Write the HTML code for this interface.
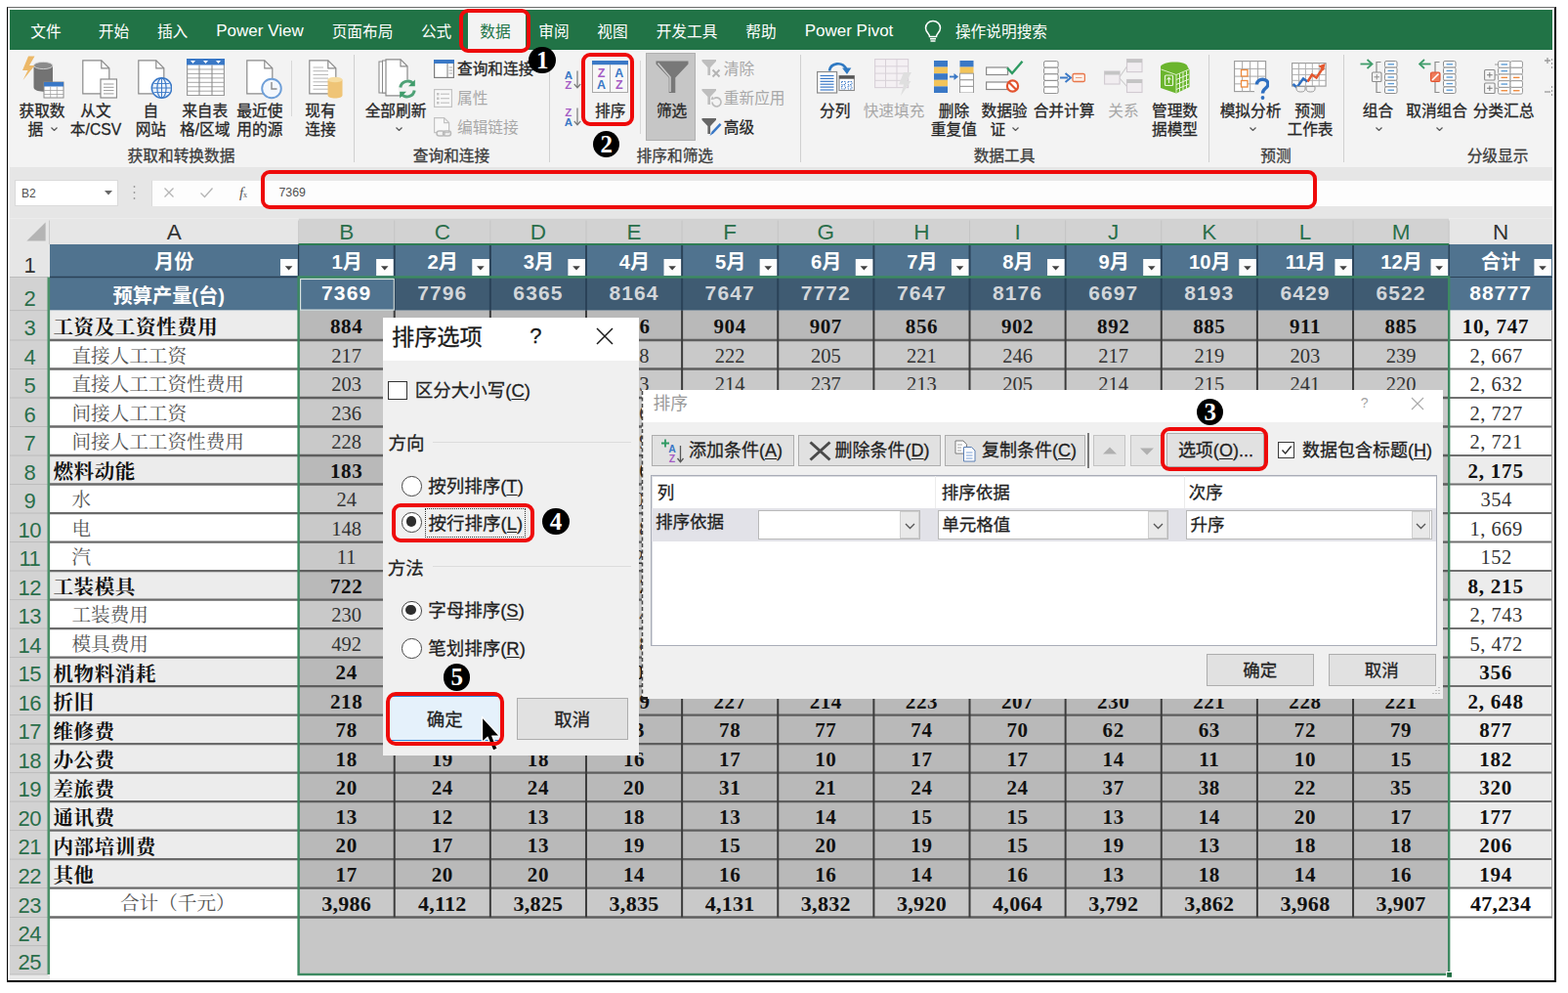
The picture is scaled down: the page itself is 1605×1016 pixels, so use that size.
<!DOCTYPE html>
<html lang="zh-CN"><head><meta charset="utf-8">
<title>Excel - 排序</title>
<style>
html,body{margin:0;padding:0;}
body{width:1605px;height:1016px;position:relative;overflow:hidden;background:#fff;font-family:"Liberation Sans", "Noto Sans CJK SC", sans-serif;}
div,svg{position:absolute;box-sizing:border-box;}
.t{white-space:nowrap;overflow:visible;font-family:"Liberation Sans", "Noto Sans CJK SC", sans-serif;}
.f{font-family:"Liberation Serif", "Noto Serif CJK SC", serif;}
.h{-webkit-text-stroke:.28px currentColor;}
u{text-decoration:underline;text-underline-offset:2px;}
</style></head>
<body>
<div style="left:7px;top:7px;width:1586px;height:998px;border-top:1px solid #6b6b6b;border-left:1.5px solid #000;border-right:2px solid #000;border-bottom:2px solid #000;"></div>
<div style="left:10px;top:9.5px;width:1579px;height:41.8px;background:#217346;"></div>
<div class="t" style="left:-153px;top:22.9px;width:400px;height:20px;line-height:20px;font-size:15.7px;color:#fff;text-align:center;">文件</div>
<div class="t" style="left:-83.5px;top:22.9px;width:400px;height:20px;line-height:20px;font-size:15.7px;color:#fff;text-align:center;">开始</div>
<div class="t" style="left:-23.4px;top:22.9px;width:400px;height:20px;line-height:20px;font-size:15.7px;color:#fff;text-align:center;">插入</div>
<div class="t" style="left:171px;top:22.9px;width:400px;height:20px;line-height:20px;font-size:15.7px;color:#fff;text-align:center;">页面布局</div>
<div class="t" style="left:246.6px;top:22.9px;width:400px;height:20px;line-height:20px;font-size:15.7px;color:#fff;text-align:center;">公式</div>
<div class="t" style="left:367px;top:22.9px;width:400px;height:20px;line-height:20px;font-size:15.7px;color:#fff;text-align:center;">审阅</div>
<div class="t" style="left:427px;top:22.9px;width:400px;height:20px;line-height:20px;font-size:15.7px;color:#fff;text-align:center;">视图</div>
<div class="t" style="left:503px;top:22.9px;width:400px;height:20px;line-height:20px;font-size:15.7px;color:#fff;text-align:center;">开发工具</div>
<div class="t" style="left:579px;top:22.9px;width:400px;height:20px;line-height:20px;font-size:15.7px;color:#fff;text-align:center;">帮助</div>
<div class="t" style="left:825px;top:22.9px;width:400px;height:20px;line-height:20px;font-size:15.7px;color:#fff;text-align:center;">操作说明搜索</div>
<div class="t" style="left:66px;top:20.6px;width:400px;height:22px;line-height:22px;font-size:17px;color:#fff;text-align:center;">Power View</div>
<div class="t" style="left:669px;top:20.6px;width:400px;height:22px;line-height:22px;font-size:17px;color:#fff;text-align:center;">Power Pivot</div>
<div style="left:478.5px;top:13px;width:59px;height:39px;background:#f3f3f3;"></div>
<div class="t" style="left:307px;top:22.9px;width:400px;height:20px;line-height:20px;font-size:15.7px;color:#217346;text-align:center;">数据</div>
<svg style="left:945px;top:20px;" width="20" height="25" viewBox="0 0 20 25"><path d="M10 1.5c-4.4 0-7.5 3.2-7.5 7.2 0 2.6 1.4 4.2 2.7 5.8 .8 1 1.3 1.9 1.3 3.1h7c0-1.2 .5-2.1 1.3-3.1 1.3-1.6 2.7-3.2 2.7-5.8 0-4-3.100-7.200-7.500-7.200z" fill="none" stroke="#fff" stroke-width="1.5"/><path d="M7 19.800h6M7.500 22h5" stroke="#fff" stroke-width="1.400" fill="none"/></svg>
<div style="left:10px;top:51.3px;width:1579px;height:119.7px;background:#f3f3f3;"></div>
<div style="left:361.8px;top:56px;width:1px;height:110px;background:#d0d0d0;"></div>
<div style="left:561.5px;top:56px;width:1px;height:110px;background:#d0d0d0;"></div>
<div style="left:819.1px;top:56px;width:1px;height:110px;background:#d0d0d0;"></div>
<div style="left:1236.8px;top:56px;width:1px;height:110px;background:#d0d0d0;"></div>
<div style="left:1374.9px;top:56px;width:1px;height:110px;background:#d0d0d0;"></div>
<div style="left:297.5px;top:62px;width:1px;height:57px;background:#d8d8d8;"></div>
<div style="left:654.5px;top:62px;width:1px;height:75px;background:#d8d8d8;"></div>
<svg style="left:20px;top:57px;" width="46" height="44" viewBox="0 0 46 44"><path d="M14.500 10h19.500v22.500c0 2.300-4.200 4.200-9.750 4.200s-9.750-1.900-9.750-4.200z" fill="#737373" /><ellipse cx="24.250" cy="10" rx="9.750" ry="3.600" fill="#8b8b8b" stroke="#d9d9d9" stroke-width="0.900"/><path d="M9 0.500L3 15h5.500L3.500 25 15.500 10H10l5.500-9.500z" fill="#ecb868" /><rect x="25" y="27" width="20" height="16" fill="#fff" stroke="#8a8a8a" stroke-width="1"/><rect x="25" y="27" width="20" height="4.5" fill="#3a78c6"/><path d="M25 35.5H45" fill="none" stroke="#a0a0a0" stroke-width="0.8" /><path d="M25 39.5H45" fill="none" stroke="#a0a0a0" stroke-width="0.8" /><path d="M31.7 31.5V43" fill="none" stroke="#a0a0a0" stroke-width="0.8" /><path d="M38.3 31.5V43" fill="none" stroke="#a0a0a0" stroke-width="0.8" /></svg>
<div class="t h" style="left:-157px;top:103.6px;width:400px;height:20px;line-height:20px;font-size:15.7px;color:#262626;text-align:center;">获取数</div>
<div class="t h" style="left:-157px;top:122.6px;width:400px;height:20px;line-height:20px;font-size:15.7px;color:#262626;text-align:center;">据&nbsp;&nbsp;&nbsp;</div>
<svg style="left:51.5px;top:130px;" width="7" height="4" viewBox="0 0 7 4"><path d="M0.5 0.5 L3.5 3.5 L6.5 0.5" fill="none" stroke="#555" stroke-width="1.2"/></svg>
<svg style="left:84.3px;top:61px;" width="36" height="40" viewBox="0 0 36 40"><path d="M0.8 0.8H19.8L27.8 8.8V34.8H0.8Z" fill="#fff" stroke="#8a8a8a" stroke-width="1.2" /><path d="M19.8 0.8V8.8H27.8" fill="none" stroke="#8a8a8a" stroke-width="1.2" /><rect x="19" y="20" width="16.5" height="19" fill="#fff" stroke="#8a8a8a" stroke-width="1.2"/><path d="M22 25.0H32.5" fill="none" stroke="#9a9a9a" stroke-width="1" /><path d="M22 28.3H32.5" fill="none" stroke="#9a9a9a" stroke-width="1" /><path d="M22 31.6H32.5" fill="none" stroke="#9a9a9a" stroke-width="1" /><path d="M22 34.9H32.5" fill="none" stroke="#9a9a9a" stroke-width="1" /></svg>
<div class="t h" style="left:-102px;top:103.6px;width:400px;height:20px;line-height:20px;font-size:15.7px;color:#262626;text-align:center;">从文</div>
<div class="t h" style="left:-102px;top:122.6px;width:400px;height:20px;line-height:20px;font-size:15.7px;color:#262626;text-align:center;">本/CSV</div>
<svg style="left:141.2px;top:61px;" width="35" height="40" viewBox="0 0 35 40"><path d="M0.8 0.8H18.8L26.8 8.8V34.8H0.8Z" fill="#fff" stroke="#8a8a8a" stroke-width="1.2" /><path d="M18.8 0.8V8.8H26.8" fill="none" stroke="#8a8a8a" stroke-width="1.2" /><circle cx="24.500" cy="29" r="10.200" fill="#eaf2fb" stroke="#3a78c6" stroke-width="1.500"/><ellipse cx="24.500" cy="29" rx="4.600" ry="10.200" fill="none" stroke="#3a78c6" stroke-width="1.200"/><path d="M15 29H34" fill="none" stroke="#3a78c6" stroke-width="1" /><path d="M24.5 19.5V38.5" fill="none" stroke="#3a78c6" stroke-width="1" /><path d="M16.500 24.500h16M16.500 33.500h16" fill="none" stroke="#3a78c6" stroke-width="0.9" /></svg>
<div class="t h" style="left:-45.7px;top:103.6px;width:400px;height:20px;line-height:20px;font-size:15.7px;color:#262626;text-align:center;">自</div>
<div class="t h" style="left:-45.7px;top:122.6px;width:400px;height:20px;line-height:20px;font-size:15.7px;color:#262626;text-align:center;">网站</div>
<svg style="left:190.5px;top:60px;" width="39" height="38" viewBox="0 0 39 38"><rect x="0.6" y="0.6" width="37.8" height="37" fill="#fff" stroke="#9a9a9a" stroke-width="1.2"/><rect x="0" y="0" width="39" height="6.5" fill="#3a78c6"/><path d="M4.0 2h5l-2.500 3z" fill="#fff" /><path d="M17.0 2h5l-2.500 3z" fill="#fff" /><path d="M30.0 2h5l-2.500 3z" fill="#fff" /><path d="M0.6 10.95H38.4" fill="none" stroke="#a6a6a6" stroke-width="1" /><path d="M0.6 15.4H38.4" fill="none" stroke="#a6a6a6" stroke-width="1" /><path d="M0.6 19.85H38.4" fill="none" stroke="#a6a6a6" stroke-width="1" /><path d="M0.6 24.3H38.4" fill="none" stroke="#a6a6a6" stroke-width="1" /><path d="M0.6 28.75H38.4" fill="none" stroke="#a6a6a6" stroke-width="1" /><path d="M0.6 33.2H38.4" fill="none" stroke="#a6a6a6" stroke-width="1" /><path d="M13 6.5V37.5" fill="none" stroke="#8f8f8f" stroke-width="1.1" /><path d="M26 6.5V37.5" fill="none" stroke="#8f8f8f" stroke-width="1.1" /></svg>
<div class="t h" style="left:9.7px;top:103.6px;width:400px;height:20px;line-height:20px;font-size:15.7px;color:#262626;text-align:center;">来自表</div>
<div class="t h" style="left:9.7px;top:122.6px;width:400px;height:20px;line-height:20px;font-size:15.7px;color:#262626;text-align:center;">格/区域</div>
<svg style="left:251.5px;top:61px;" width="37" height="41" viewBox="0 0 37 41"><path d="M0.8 0.8H18.8L26.8 8.8V34.8H0.8Z" fill="#fff" stroke="#8a8a8a" stroke-width="1.2" /><path d="M18.8 0.8V8.8H26.8" fill="none" stroke="#8a8a8a" stroke-width="1.2" /><circle cx="26" cy="29.500" r="9.800" fill="#f4f8fd" stroke="#6e9fd8" stroke-width="1.900"/><path d="M26 23v7h5.500" fill="none" stroke="#8a8a8a" stroke-width="1.4" /></svg>
<div class="t h" style="left:65.8px;top:103.6px;width:400px;height:20px;line-height:20px;font-size:15.7px;color:#262626;text-align:center;">最近使</div>
<div class="t h" style="left:65.8px;top:122.6px;width:400px;height:20px;line-height:20px;font-size:15.7px;color:#262626;text-align:center;">用的源</div>
<svg style="left:315.5px;top:61px;" width="36" height="40" viewBox="0 0 36 40"><path d="M0.8 0.8H19.8L27.8 8.8V34.8H0.8Z" fill="#fff" stroke="#8a8a8a" stroke-width="1.2" /><path d="M19.8 0.8V8.8H27.8" fill="none" stroke="#8a8a8a" stroke-width="1.2" /><path d="M4.5 8.0H15" fill="none" stroke="#b5b5b5" stroke-width="1" /><path d="M4.5 11.7H20" fill="none" stroke="#b5b5b5" stroke-width="1" /><path d="M4.5 15.4H20" fill="none" stroke="#b5b5b5" stroke-width="1" /><path d="M4.5 19.1H20" fill="none" stroke="#b5b5b5" stroke-width="1" /><path d="M4.5 22.8H20" fill="none" stroke="#b5b5b5" stroke-width="1" /><path d="M4.5 26.5H20" fill="none" stroke="#b5b5b5" stroke-width="1" /><path d="M4.5 30.200000000000003H20" fill="none" stroke="#b5b5b5" stroke-width="1" /><path d="M19.500 20.500h15v16c0 1.700-3.300 3-7.500 3s-7.500-1.300-7.500-3z" fill="#efc476" /><ellipse cx="27" cy="20.500" rx="7.500" ry="2.800" fill="#f6dca0"/></svg>
<div class="t h" style="left:128px;top:103.6px;width:400px;height:20px;line-height:20px;font-size:15.7px;color:#262626;text-align:center;">现有</div>
<div class="t h" style="left:128px;top:122.6px;width:400px;height:20px;line-height:20px;font-size:15.7px;color:#262626;text-align:center;">连接</div>
<svg style="left:387px;top:60px;" width="40" height="42" viewBox="0 0 40 42"><path d="M1 3h15l6 6v26H1z" fill="#fff" stroke="#8a8a8a" stroke-width="1.1" /><path d="M4.500 2h15l6 6v27H4.500z" fill="#fff" stroke="#8a8a8a" stroke-width="1.1" /><path d="M8 0.800h15l7 7v30H8z" fill="#fff" stroke="#8a8a8a" stroke-width="1.2" /><path d="M23 0.800v7h7" fill="none" stroke="#8a8a8a" stroke-width="1.2" /><circle cx="30" cy="31" r="9.500" fill="#f3f3f3"/><path d="M22.800 29.500a7.600 7.600 0 0 1 13.400-3.600" fill="none" stroke="#4fa277" stroke-width="3" /><path d="M37.800 21.500v6.800h-6.800z" fill="#3f9c6a" /><path d="M37.200 32.500a7.600 7.600 0 0 1-13.400 3.600" fill="none" stroke="#4fa277" stroke-width="3" /><path d="M22.200 40.500v-6.800h6.800z" fill="#3f9c6a" /></svg>
<div class="t h" style="left:205px;top:103.6px;width:400px;height:20px;line-height:20px;font-size:15.7px;color:#262626;text-align:center;">全部刷新</div>
<svg style="left:404.5px;top:130px;" width="7" height="4" viewBox="0 0 7 4"><path d="M0.5 0.5 L3.5 3.5 L6.5 0.5" fill="none" stroke="#555" stroke-width="1.2"/></svg>
<svg style="left:835.5px;top:61px;" width="39" height="35" viewBox="0 0 39 35"><rect x="0.6" y="12.5" width="20" height="21.5" fill="#fff" stroke="#8a8a8a" stroke-width="1.2"/><path d="M3.5 16.5H17.5" fill="none" stroke="#3a78c6" stroke-width="1.2" /><path d="M3.5 19.4H17.5" fill="none" stroke="#3a78c6" stroke-width="1.2" /><path d="M3.5 22.3H17.5" fill="none" stroke="#3a78c6" stroke-width="1.2" /><path d="M3.5 25.2H17.5" fill="none" stroke="#3a78c6" stroke-width="1.2" /><path d="M3.5 28.1H17.5" fill="none" stroke="#3a78c6" stroke-width="1.2" /><path d="M3.5 31.0H17.5" fill="none" stroke="#3a78c6" stroke-width="1.2" /><rect x="23" y="16.5" width="15.4" height="15" fill="#fff" stroke="#8a8a8a" stroke-width="1.1"/><rect x="23" y="16.5" width="15.4" height="3.2" fill="#555"/><path d="M25.500 22.500h4v3h-4zM32 22.500h4v3h-4zM25.500 27h4v3h-4zM32 27h4v3h-4z" fill="none" stroke="#3a78c6" stroke-width="0.9" stroke-dasharray="1.500 1"/><path d="M13 11.500c1-8 13-10.500 17.500-1.500" fill="none" stroke="#2f79c2" stroke-width="2.6" /><path d="M26 8.500h9.500v-0.300L31 15z" fill="#2f79c2" /></svg>
<div class="t h" style="left:654.8px;top:103.6px;width:400px;height:20px;line-height:20px;font-size:15.7px;color:#262626;text-align:center;">分列</div>
<svg style="left:894.5px;top:60px;opacity:.45;" width="39" height="39" viewBox="0 0 39 39"><rect x="0.6" y="0.6" width="34" height="29" fill="#f6eef4" stroke="#b9a9b9" stroke-width="1.1"/><path d="M0.6 7.85H34.6" fill="none" stroke="#b9a9b9" stroke-width="1" /><path d="M0.6 15.1H34.6" fill="none" stroke="#b9a9b9" stroke-width="1" /><path d="M0.6 22.35H34.6" fill="none" stroke="#b9a9b9" stroke-width="1" /><path d="M11.5 0.6V29.6" fill="none" stroke="#b9a9b9" stroke-width="1" /><path d="M23 0.6V29.6" fill="none" stroke="#b9a9b9" stroke-width="1" /><path d="M30 14h8l-5 9h4.500L27 38l3-11.500h-5z" fill="#c9c9c9" /></svg>
<div class="t" style="left:715px;top:103.6px;width:400px;height:20px;line-height:20px;font-size:15.7px;color:#a8a8a8;text-align:center;">快速填充</div>
<svg style="left:955.5px;top:62px;" width="41" height="33" viewBox="0 0 41 33"><rect x="0" y="0" width="14" height="6.6" fill="#3a78c6"/><rect x="0" y="6.6" width="14" height="6.6" fill="#f2c45a"/><rect x="0" y="13.2" width="14" height="6.6" fill="#3a78c6"/><rect x="0" y="19.8" width="14" height="6.6" fill="#f2c45a"/><rect x="0" y="26.4" width="14" height="6.6" fill="#3a78c6"/><rect x="26.5" y="0" width="14" height="6.6" fill="#3a78c6"/><rect x="26.5" y="6.6" width="14" height="6.6" fill="#f2c45a"/><rect x="26.5" y="13.2" width="14" height="6.6" fill="#fff" stroke="#9a9a9a" stroke-width="1"/><rect x="26.5" y="19.8" width="14" height="6.6" fill="#fff" stroke="#9a9a9a" stroke-width="1"/><rect x="26.5" y="26.4" width="14" height="6.6" fill="#fff" stroke="#9a9a9a" stroke-width="1"/><path d="M16 16.500h6" fill="none" stroke="#3a78c6" stroke-width="1.8" /><path d="M20.500 13l4.500 3.500-4.500 3.500z" fill="#3a78c6" /></svg>
<div class="t h" style="left:776.4px;top:103.6px;width:400px;height:20px;line-height:20px;font-size:15.7px;color:#262626;text-align:center;">删除</div>
<div class="t h" style="left:776.4px;top:122.6px;width:400px;height:20px;line-height:20px;font-size:15.7px;color:#262626;text-align:center;">重复值</div>
<svg style="left:1008.5px;top:61.5px;" width="39" height="34" viewBox="0 0 39 34"><rect x="0.6" y="7" width="22" height="7.5" fill="#fff" stroke="#8a8a8a" stroke-width="1.2"/><rect x="0.6" y="22" width="22" height="7.5" fill="#fff" stroke="#8a8a8a" stroke-width="1.2"/><path d="M22 7.500l5 5.500L37.500 0.800" fill="none" stroke="#2f9a62" stroke-width="2.4" /><circle cx="27.500" cy="26" r="5.600" fill="#fff" stroke="#e2532f" stroke-width="2.200"/><path d="M23.800 22.300l7.400 7.400" fill="none" stroke="#e2532f" stroke-width="2.2" /></svg>
<div class="t h" style="left:828px;top:103.6px;width:400px;height:20px;line-height:20px;font-size:15.7px;color:#262626;text-align:center;">数据验</div>
<div class="t h" style="left:828px;top:122.6px;width:400px;height:20px;line-height:20px;font-size:15.7px;color:#262626;text-align:center;">证&nbsp;&nbsp;&nbsp;</div>
<svg style="left:1035.5px;top:130px;" width="7" height="4" viewBox="0 0 7 4"><path d="M0.5 0.5 L3.5 3.5 L6.5 0.5" fill="none" stroke="#555" stroke-width="1.2"/></svg>
<svg style="left:1067.5px;top:61.5px;" width="43" height="34" viewBox="0 0 43 34"><rect x="0.6" y="0.6" width="14.5" height="6.6" fill="#fff" stroke="#8a8a8a" stroke-width="1" rx="1.5"/><rect x="0.6" y="7.2" width="14.5" height="6.6" fill="#fff" stroke="#8a8a8a" stroke-width="1" rx="1.5"/><rect x="0.6" y="13.8" width="14.5" height="6.6" fill="#fff" stroke="#8a8a8a" stroke-width="1" rx="1.5"/><rect x="0.6" y="20.4" width="14.5" height="6.6" fill="#fff" stroke="#8a8a8a" stroke-width="1" rx="1.5"/><rect x="0.6" y="27" width="14.5" height="6.6" fill="#fff" stroke="#8a8a8a" stroke-width="1" rx="1.5"/><path d="M17 17.500h8" fill="none" stroke="#3a78c6" stroke-width="2" /><path d="M22.500 13l5.500 4.500-5.500 4.500" fill="none" stroke="#3a78c6" stroke-width="2" /><rect x="30" y="13.5" width="12.4" height="8" fill="#fdf1ea" stroke="#e8764a" stroke-width="1.3" rx="1.5"/><path d="M33 17.5H39.5" fill="none" stroke="#e8a080" stroke-width="1" /></svg>
<div class="t h" style="left:889px;top:103.6px;width:400px;height:20px;line-height:20px;font-size:15.7px;color:#262626;text-align:center;">合并计算</div>
<svg style="left:1130px;top:60px;opacity:.45;" width="40" height="36" viewBox="0 0 40 36"><path d="M15.500 19.500l8-11.500M15.500 19.500l8 9" fill="none" stroke="#9a9a9a" stroke-width="1.1" /><rect x="0.6" y="13" width="15.5" height="13" fill="#efe6ee" stroke="#a99aa9" stroke-width="1.1"/><rect x="0.6" y="13" width="15.5" height="3.5" fill="#8c8c8c"/><rect x="23.5" y="0.6" width="15.5" height="13" fill="#efe6ee" stroke="#a99aa9" stroke-width="1.1"/><rect x="23.5" y="0.6" width="15.5" height="3.5" fill="#8c8c8c"/><rect x="23.5" y="21.5" width="15.5" height="13" fill="#efe6ee" stroke="#a99aa9" stroke-width="1.1"/><rect x="23.5" y="21.5" width="15.5" height="3.5" fill="#8c8c8c"/></svg>
<div class="t" style="left:950px;top:103.6px;width:400px;height:20px;line-height:20px;font-size:15.7px;color:#a8a8a8;text-align:center;">关系</div>
<svg style="left:1186.5px;top:62.5px;" width="31" height="33" viewBox="0 0 31 33"><path d="M15.500 0.500c7.500 0 13 2 13 4.500l2 3.500v17.500l-13.500 6.500-16-5.500V5c1-2.500 7-4.500 14.500-4.500z" fill="#6bb52e" /><path d="M17 13.500l13-5.500M17 13.500v19M17 13.500L1.500 8" fill="none" stroke="#d8efc4" stroke-width="1" /><path d="M20.500 12.300v18.500M24 10.800v18.500M27.500 9.300v18.500M17 18.500l13-5.500M17 23.500l13-5.500M17 28.500l13-5.500" fill="none" stroke="#e9f6dc" stroke-width="1" /><rect x="5.5" y="14" width="8" height="10.5" fill="none" stroke="#e9f6dc" stroke-width="1.2" rx="1"/><path d="M9.500 22v-5.500M7.500 18.500l2-2.200 2 2.200" fill="none" stroke="#e9f6dc" stroke-width="1.1" /></svg>
<div class="t h" style="left:1002.5px;top:103.6px;width:400px;height:20px;line-height:20px;font-size:15.7px;color:#262626;text-align:center;">管理数</div>
<div class="t h" style="left:1002.5px;top:122.6px;width:400px;height:20px;line-height:20px;font-size:15.7px;color:#262626;text-align:center;">据模型</div>
<svg style="left:1263px;top:61.5px;" width="36" height="40" viewBox="0 0 36 40"><rect x="0.6" y="0.6" width="32" height="31" fill="#fff" stroke="#9a9a9a" stroke-width="1.1"/><path d="M0.6 8.35H32.6" fill="none" stroke="#a8a8a8" stroke-width="1" /><path d="M8.6 0.6V31.6" fill="none" stroke="#a8a8a8" stroke-width="1" /><path d="M0.6 16.1H32.6" fill="none" stroke="#a8a8a8" stroke-width="1" /><path d="M16.6 0.6V31.6" fill="none" stroke="#a8a8a8" stroke-width="1" /><path d="M0.6 23.85H32.6" fill="none" stroke="#a8a8a8" stroke-width="1" /><path d="M24.6 0.6V31.6" fill="none" stroke="#a8a8a8" stroke-width="1" /><rect x="7.5" y="9.5" width="6.5" height="6.5" fill="#fff" stroke="#ee8a3c" stroke-width="1.3"/><rect x="7.5" y="20.5" width="6.5" height="6.5" fill="#fff" stroke="#ee8a3c" stroke-width="1.3"/><circle cx="29" cy="29" r="8.500" fill="#f3f3f3"/><path d="M23.500 24.500c0-7 11.500-7 11.500-0.500 0 4.500-5.500 4-5.500 9.500" fill="none" stroke="#2f6fc0" stroke-width="3.4" /><circle cx="29.500" cy="38" r="1.900" fill="#2f6fc0"/></svg>
<div class="t h" style="left:1080px;top:103.6px;width:400px;height:20px;line-height:20px;font-size:15.7px;color:#262626;text-align:center;">模拟分析</div>
<svg style="left:1278.5px;top:130px;" width="7" height="4" viewBox="0 0 7 4"><path d="M0.5 0.5 L3.5 3.5 L6.5 0.5" fill="none" stroke="#555" stroke-width="1.2"/></svg>
<svg style="left:1321.5px;top:64px;" width="37" height="32" viewBox="0 0 37 32"><rect x="0.6" y="0.6" width="34.5" height="23.5" fill="#fff" stroke="#9a9a9a" stroke-width="1.1"/><path d="M0.6 6.5H35" fill="none" stroke="#b0b0b0" stroke-width="1" /><path d="M0.6 12.4H35" fill="none" stroke="#b0b0b0" stroke-width="1" /><path d="M0.6 18.300000000000004H35" fill="none" stroke="#b0b0b0" stroke-width="1" /><path d="M7.5 0.6V24" fill="none" stroke="#b0b0b0" stroke-width="1" /><path d="M14.4 0.6V24" fill="none" stroke="#b0b0b0" stroke-width="1" /><path d="M21.300000000000004 0.6V24" fill="none" stroke="#b0b0b0" stroke-width="1" /><path d="M28.200000000000003 0.6V24" fill="none" stroke="#b0b0b0" stroke-width="1" /><path d="M1.500 22l4 3.500 6.500-9 4.500 3" fill="none" stroke="#2f6fc0" stroke-width="2.4" /><path d="M16.500 19.500l4.500-7 4.500 3 7-10.500" fill="none" stroke="#e4572e" stroke-width="2.4" /><path d="M27.500 3.500l7-2.500-1.500 7.500z" fill="#e4572e" /><path d="M5 24.500h9v2.500c0 2-1.500 3-4.500 3s-4.500-1-4.500-3zM15 24.500h9v2.500c0 2-1.500 3-4.500 3s-4.500-1-4.500-3z" fill="#f3f3f3" stroke="#9a9a9a" stroke-width="1" /></svg>
<div class="t h" style="left:1141px;top:103.6px;width:400px;height:20px;line-height:20px;font-size:15.7px;color:#262626;text-align:center;">预测</div>
<div class="t h" style="left:1141px;top:122.6px;width:400px;height:20px;line-height:20px;font-size:15.7px;color:#262626;text-align:center;">工作表</div>
<svg style="left:1391.5px;top:60px;" width="39" height="36" viewBox="0 0 39 36"><path d="M0.500 5.500h11" fill="none" stroke="#3f9c6a" stroke-width="1.8" /><path d="M7.500 1l5 4.500-5 4.500" fill="none" stroke="#3f9c6a" stroke-width="1.8" /><path d="M21.500 3.500h-4.500v31h4.500" fill="none" stroke="#8c8c8c" stroke-width="1.2" /><rect x="12.5" y="14" width="9.5" height="9.5" fill="#f3f3f3" stroke="#8c8c8c" stroke-width="1.1" rx="1"/><path d="M14.500 18.800h5.500M17.250 16v5.500" fill="none" stroke="#8c8c8c" stroke-width="1" /><rect x="25.5" y="2.5" width="12.5" height="6.6" fill="#fff" stroke="#8c8c8c" stroke-width="1" rx="1.5"/><path d="M28.5 5.8H35.0" fill="none" stroke="#5b9bd5" stroke-width="1.4" /><rect x="25.5" y="9.1" width="12.5" height="6.6" fill="#fff" stroke="#8c8c8c" stroke-width="1" rx="1.5"/><path d="M28.5 12.399999999999999H35.0" fill="none" stroke="#5b9bd5" stroke-width="1.4" /><rect x="25.5" y="15.7" width="12.5" height="6.6" fill="#fff" stroke="#8c8c8c" stroke-width="1" rx="1.5"/><path d="M28.5 19.0H35.0" fill="none" stroke="#5b9bd5" stroke-width="1.4" /><rect x="25.5" y="22.3" width="12.5" height="6.6" fill="#fff" stroke="#8c8c8c" stroke-width="1" rx="1.5"/><path d="M28.5 25.599999999999998H35.0" fill="none" stroke="#5b9bd5" stroke-width="1.4" /><rect x="25.5" y="28.9" width="12.5" height="6.6" fill="#fff" stroke="#8c8c8c" stroke-width="1" rx="1.5"/><path d="M28.5 32.199999999999996H35.0" fill="none" stroke="#5b9bd5" stroke-width="1.4" /></svg>
<div class="t h" style="left:1210.4px;top:103.6px;width:400px;height:20px;line-height:20px;font-size:15.7px;color:#262626;text-align:center;">组合</div>
<svg style="left:1407.5px;top:130px;" width="7" height="4" viewBox="0 0 7 4"><path d="M0.5 0.5 L3.5 3.5 L6.5 0.5" fill="none" stroke="#555" stroke-width="1.2"/></svg>
<svg style="left:1451.5px;top:60px;" width="39" height="36" viewBox="0 0 39 36"><path d="M1.500 5.500h11" fill="none" stroke="#3f9c6a" stroke-width="1.8" /><path d="M6 1L1 5.500 6 10" fill="none" stroke="#3f9c6a" stroke-width="1.8" /><path d="M21.500 3.500h-4.500v31h4.500" fill="none" stroke="#8c8c8c" stroke-width="1.2" /><rect x="12.5" y="14" width="9.5" height="9.5" fill="#ee7b5a" stroke="#e2532f" stroke-width="1.1" rx="1.5"/><path d="M14 22l6.500-6.500" fill="none" stroke="#fff" stroke-width="1.6" /><rect x="25.5" y="2.5" width="12.5" height="6.6" fill="#fff" stroke="#8c8c8c" stroke-width="1" rx="1.5"/><path d="M28.5 5.8H35.0" fill="none" stroke="#5b9bd5" stroke-width="1.4" /><rect x="25.5" y="9.1" width="12.5" height="6.6" fill="#fff" stroke="#8c8c8c" stroke-width="1" rx="1.5"/><path d="M28.5 12.399999999999999H35.0" fill="none" stroke="#5b9bd5" stroke-width="1.4" /><rect x="25.5" y="15.7" width="12.5" height="6.6" fill="#fff" stroke="#8c8c8c" stroke-width="1" rx="1.5"/><path d="M28.5 19.0H35.0" fill="none" stroke="#5b9bd5" stroke-width="1.4" /><rect x="25.5" y="22.3" width="12.5" height="6.6" fill="#fff" stroke="#8c8c8c" stroke-width="1" rx="1.5"/><path d="M28.5 25.599999999999998H35.0" fill="none" stroke="#5b9bd5" stroke-width="1.4" /><rect x="25.5" y="28.9" width="12.5" height="6.6" fill="#fff" stroke="#8c8c8c" stroke-width="1" rx="1.5"/><path d="M28.5 32.199999999999996H35.0" fill="none" stroke="#5b9bd5" stroke-width="1.4" /></svg>
<div class="t h" style="left:1270.6px;top:103.6px;width:400px;height:20px;line-height:20px;font-size:15.7px;color:#262626;text-align:center;">取消组合</div>
<svg style="left:1469.5px;top:130px;" width="7" height="4" viewBox="0 0 7 4"><path d="M0.5 0.5 L3.5 3.5 L6.5 0.5" fill="none" stroke="#555" stroke-width="1.2"/></svg>
<svg style="left:1519px;top:61.5px;" width="40" height="35" viewBox="0 0 40 35"><rect x="0.6" y="9.5" width="10.5" height="10.5" fill="#f6f6f6" stroke="#8c8c8c" stroke-width="1.1" rx="1"/><path d="M3 14.750h5.700M5.850 12v5.500" fill="none" stroke="#777" stroke-width="1" /><rect x="0.6" y="23" width="10.5" height="10.5" fill="#f6f6f6" stroke="#8c8c8c" stroke-width="1.1" rx="1"/><path d="M3 28.250h5.700M5.850 25.500v5.500" fill="none" stroke="#777" stroke-width="1" /><path d="M11 4h4M11 14.750h3M11 28.250h3" fill="none" stroke="#9a9a9a" stroke-width="1" /><rect x="14.5" y="0.6" width="12.5" height="6.7" fill="#fff" stroke="#9a9a9a" stroke-width="1" rx="1.5"/><path d="M17.5 3.95H24.0" fill="none" stroke="#5b9bd5" stroke-width="1.4" /><rect x="14.5" y="7.3" width="12.5" height="6.7" fill="#fff" stroke="#9a9a9a" stroke-width="1" rx="1.5"/><path d="M17.5 10.65H24.0" fill="none" stroke="#5b9bd5" stroke-width="1.4" /><rect x="14.5" y="14" width="12.5" height="6.7" fill="#fff" stroke="#9a9a9a" stroke-width="1" rx="1.5"/><path d="M17.5 17.35H24.0" fill="none" stroke="#ee8a3c" stroke-width="1.4" /><rect x="14.5" y="20.7" width="12.5" height="6.7" fill="#fff" stroke="#9a9a9a" stroke-width="1" rx="1.5"/><path d="M17.5 24.050000000000004H24.0" fill="none" stroke="#5b9bd5" stroke-width="1.4" /><rect x="14.5" y="27.4" width="12.5" height="6.7" fill="#fff" stroke="#9a9a9a" stroke-width="1" rx="1.5"/><path d="M17.5 30.750000000000004H24.0" fill="none" stroke="#ee8a3c" stroke-width="1.4" /><rect x="27" y="0.6" width="12.5" height="6.7" fill="#fff" stroke="#9a9a9a" stroke-width="1" rx="1.5"/><path d="M30 3.95H36.5" fill="none" stroke="#fff" stroke-width="1.4" /><rect x="27" y="7.3" width="12.5" height="6.7" fill="#fff" stroke="#9a9a9a" stroke-width="1" rx="1.5"/><path d="M30 10.65H36.5" fill="none" stroke="#fff" stroke-width="1.4" /><rect x="27" y="14" width="12.5" height="6.7" fill="#fff" stroke="#9a9a9a" stroke-width="1" rx="1.5"/><path d="M30 17.35H36.5" fill="none" stroke="#ee8a3c" stroke-width="1.4" /><rect x="27" y="20.7" width="12.5" height="6.7" fill="#fff" stroke="#9a9a9a" stroke-width="1" rx="1.5"/><path d="M30 24.050000000000004H36.5" fill="none" stroke="#fff" stroke-width="1.4" /><rect x="27" y="27.4" width="12.5" height="6.7" fill="#fff" stroke="#9a9a9a" stroke-width="1" rx="1.5"/><path d="M30 30.750000000000004H36.5" fill="none" stroke="#ee8a3c" stroke-width="1.4" /></svg>
<div class="t h" style="left:1339px;top:103.6px;width:400px;height:20px;line-height:20px;font-size:15.7px;color:#262626;text-align:center;">分类汇总</div>
<div style="left:660.7px;top:54px;width:51.6px;height:90.3px;background:#c6c6c6;border:1px solid #b0b0b0;"></div>
<svg style="left:671px;top:61px;" width="34" height="35" viewBox="0 0 34 35"><path d="M0.500 1.500h33v3L20.300 18.500v15.500h-6.600V18.500L0.500 4.500z" fill="#787878" /><path d="M2.500 3.500L15 18v15" fill="none" stroke="#c9c9c9" stroke-width="1.6" /></svg>
<div class="t h" style="left:487.6px;top:103.6px;width:400px;height:20px;line-height:20px;font-size:15.7px;color:#262626;text-align:center;">筛选</div>
<svg style="left:605.7px;top:62px;" width="37" height="33" viewBox="0 0 37 33"><rect x="0.5" y="0.5" width="36" height="32" fill="#f7f7f7" stroke="#a9a9a9" stroke-width="1"/><rect x="0" y="0" width="37" height="4.2" fill="#3a78c6"/><path d="M18.5 4V32.5" fill="none" stroke="#a9a9a9" stroke-width="1" /><text x="9.5" y="16.5" font-family="Liberation Sans, sans-serif" font-size="12.5" font-weight="bold" fill="#a45cc4" text-anchor="middle">Z</text><text x="9.5" y="29" font-family="Liberation Sans, sans-serif" font-size="12.5" font-weight="bold" fill="#3a78c6" text-anchor="middle">A</text><text x="27.8" y="16.5" font-family="Liberation Sans, sans-serif" font-size="12.5" font-weight="bold" fill="#3a78c6" text-anchor="middle">A</text><text x="27.8" y="29" font-family="Liberation Sans, sans-serif" font-size="12.5" font-weight="bold" fill="#a45cc4" text-anchor="middle">Z</text></svg>
<div class="t h" style="left:424.8px;top:103.6px;width:400px;height:20px;line-height:20px;font-size:15.7px;color:#262626;text-align:center;">排序</div>
<svg style="left:577px;top:70.5px;" width="18" height="21" viewBox="0 0 18 21"><text x="4.8" y="9.5" font-family="Liberation Sans, sans-serif" font-size="11.5" font-weight="bold" fill="#3a78c6" text-anchor="middle">A</text><text x="4.8" y="19.5" font-family="Liberation Sans, sans-serif" font-size="11.5" font-weight="bold" fill="#a45cc4" text-anchor="middle">Z</text><path d="M14 1.500v17M10.800 15l3.200 3.800 3.200-3.800" fill="none" stroke="#777" stroke-width="1.2" /></svg>
<svg style="left:577px;top:108.5px;" width="18" height="21" viewBox="0 0 18 21"><text x="4.8" y="9.5" font-family="Liberation Sans, sans-serif" font-size="11.5" font-weight="bold" fill="#a45cc4" text-anchor="middle">Z</text><text x="4.8" y="19.5" font-family="Liberation Sans, sans-serif" font-size="11.5" font-weight="bold" fill="#3a78c6" text-anchor="middle">A</text><path d="M14 1.500v17M10.800 15l3.200 3.800 3.200-3.800" fill="none" stroke="#777" stroke-width="1.2" /></svg>
<svg style="left:443.5px;top:60.5px;" width="21" height="19" viewBox="0 0 21 19"><rect x="0.6" y="0.6" width="19.8" height="17.8" fill="#fff" stroke="#7d7d7d" stroke-width="1.2"/><rect x="0" y="0" width="21" height="4" fill="#3a78c6"/><path d="M14 4V18.5" fill="none" stroke="#7d7d7d" stroke-width="1" /><path d="M15.5 8H19" fill="none" stroke="#aaa" stroke-width="1" /><path d="M15.5 11H19" fill="none" stroke="#aaa" stroke-width="1" /><path d="M15.5 14H19" fill="none" stroke="#aaa" stroke-width="1" /></svg>
<div class="t h" style="left:468px;top:61.2px;width:400px;height:20px;line-height:20px;font-size:15.7px;color:#262626;text-align:left;">查询和连接</div>
<svg style="left:443.5px;top:90.5px;opacity:.45;" width="19" height="19" viewBox="0 0 19 19"><rect x="0.6" y="0.6" width="17.8" height="17.8" fill="#fff" stroke="#8a8a8a" stroke-width="1.2"/><rect x="3" y="4" width="2.5" height="2.5" fill="#8a8a8a"/><path d="M7 5.2H16" fill="none" stroke="#8a8a8a" stroke-width="1.2" /><rect x="3" y="8.5" width="2.5" height="2.5" fill="#8a8a8a"/><path d="M7 9.7H16" fill="none" stroke="#8a8a8a" stroke-width="1.2" /><rect x="3" y="13" width="2.5" height="2.5" fill="#8a8a8a"/><path d="M7 14.2H16" fill="none" stroke="#8a8a8a" stroke-width="1.2" /></svg>
<div class="t" style="left:468px;top:91.2px;width:400px;height:20px;line-height:20px;font-size:15.7px;color:#a8a8a8;text-align:left;">属性</div>
<svg style="left:443.5px;top:119.7px;opacity:.45;" width="19" height="20" viewBox="0 0 19 20"><path d="M0.6 0.6H10.6L15.6 5.6V15.6H0.6Z" fill="#fff" stroke="#8a8a8a" stroke-width="1.2" /><path d="M10.6 0.6V5.6H15.6" fill="none" stroke="#8a8a8a" stroke-width="1.2" /><rect x="3" y="14" width="8" height="5" fill="#f3f3f3" stroke="#777" stroke-width="1.5" rx="2.5"/><rect x="9.5" y="14" width="8" height="5" fill="none" stroke="#777" stroke-width="1.5" rx="2.5"/></svg>
<div class="t" style="left:468px;top:120.9px;width:400px;height:20px;line-height:20px;font-size:15.7px;color:#a8a8a8;text-align:left;">编辑链接</div>
<svg style="left:717.5px;top:60px;opacity:.45;" width="21" height="20" viewBox="0 0 21 20"><path d="M0.500 1h14.500v1.800l-5.900 6.200v8h-2.700v-8L0.500 2.800z" fill="#808080" /><path d="M11.500 11.500l7 7M18.500 11.500l-7 7" fill="none" stroke="#666" stroke-width="1.8" /></svg>
<div class="t" style="left:740.8px;top:61.2px;width:400px;height:20px;line-height:20px;font-size:15.7px;color:#a8a8a8;text-align:left;">清除</div>
<svg style="left:717.5px;top:90px;opacity:.45;" width="21" height="20" viewBox="0 0 21 20"><path d="M0.500 1h14.500v1.800l-5.900 6.200v8h-2.700v-8L0.500 2.800z" fill="#808080" /><path d="M11 14.500a4.500 4.500 0 1 0 2-3.800" fill="none" stroke="#777" stroke-width="1.6" /><path d="M11 8.500l2.500 3-3.800 0.500z" fill="#777" /></svg>
<div class="t" style="left:740.8px;top:91.2px;width:400px;height:20px;line-height:20px;font-size:15.7px;color:#a8a8a8;text-align:left;">重新应用</div>
<svg style="left:717.5px;top:119.7px;" width="21" height="20" viewBox="0 0 21 20"><path d="M0.500 1h14.500v1.800l-5.900 6.200v8h-2.700v-8L0.500 2.800z" fill="#666" /><path d="M8.500 19l2.200-4.500 8-8.500 1.800 1.800-8 8.500z" fill="#3a78c6" /></svg>
<div class="t h" style="left:740.8px;top:120.9px;width:400px;height:20px;line-height:20px;font-size:15.7px;color:#262626;text-align:left;">高级</div>
<div class="t h" style="left:-14.5px;top:149.6px;width:400px;height:20px;line-height:20px;font-size:15.7px;color:#3b3b3b;text-align:center;">获取和转换数据</div>
<div class="t h" style="left:262px;top:149.6px;width:400px;height:20px;line-height:20px;font-size:15.7px;color:#3b3b3b;text-align:center;">查询和连接</div>
<div class="t h" style="left:490.8px;top:149.6px;width:400px;height:20px;line-height:20px;font-size:15.7px;color:#3b3b3b;text-align:center;">排序和筛选</div>
<div class="t h" style="left:828px;top:149.6px;width:400px;height:20px;line-height:20px;font-size:15.7px;color:#3b3b3b;text-align:center;">数据工具</div>
<div class="t h" style="left:1106px;top:149.6px;width:400px;height:20px;line-height:20px;font-size:15.7px;color:#3b3b3b;text-align:center;">预测</div>
<div class="t h" style="left:1333px;top:149.6px;width:400px;height:20px;line-height:20px;font-size:15.7px;color:#3b3b3b;text-align:center;">分级显示</div>
<svg style="left:1578px;top:58px;" width="11" height="50" viewBox="0 0 11 50"><path d="M3 4h6M6 1v6" stroke="#9a9a9a" stroke-width="1.300" fill="none"/><path d="M3 36h6" stroke="#9a9a9a" stroke-width="1.300"/><path d="M10.500 2v12M10.500 30v12" stroke="#9a9a9a" stroke-width="1" stroke-dasharray="2 2"/></svg>
<div style="left:10px;top:171px;width:1579px;height:52.5px;background:#e6e6e6;"></div>
<div style="left:15px;top:184px;width:106px;height:27px;background:#fff;border:1px solid #dadada;"></div>
<div class="t" style="left:22px;top:189.5px;width:400px;height:16px;line-height:16px;font-size:12px;color:#505050;text-align:left;">B2</div>
<svg style="left:106.5px;top:194.5px;" width="8" height="5" viewBox="0 0 8 5"><path d="M0 0h8l-4 4.500z" fill="#666"/></svg>
<svg style="left:135.5px;top:189px;" width="3" height="16" viewBox="0 0 3 16"><circle cx="1.500" cy="2" r="0.900" fill="#999"/><circle cx="1.500" cy="8" r="0.900" fill="#999"/><circle cx="1.500" cy="14" r="0.900" fill="#999"/></svg>
<div style="left:154.5px;top:184px;width:1434.5px;height:27px;background:#fdfdfd;border-left:1px solid #dadada;border-top:1px solid #e8e8e8;"></div>
<svg style="left:167px;top:191px;" width="12" height="12" viewBox="0 0 12 12"><path d="M1.500 1.500l9 9M10.500 1.500l-9 9" stroke="#b4b4b4" stroke-width="1.300" fill="none"/></svg>
<svg style="left:204px;top:191px;" width="15" height="12" viewBox="0 0 15 12"><path d="M1.500 6.500l4 4 8-9" stroke="#b4b4b4" stroke-width="1.300" fill="none"/></svg>
<div class="t f" style="left:49px;top:187px;width:400px;height:20px;line-height:20px;font-size:15px;color:#555;text-align:center;"><i>f</i><span style="font-size:8px">x</span></div>
<div class="t" style="left:285.5px;top:189.2px;width:400px;height:16px;line-height:16px;font-size:12.3px;color:#505050;text-align:left;">7369</div>
<svg style="left:0;top:0" width="1605" height="1016" viewBox="0 0 1605 1016"><rect x="10.00" y="223.50" width="1579.00" height="779.50" fill="#fff"/><rect x="10.00" y="223.50" width="41.00" height="26.50" fill="#e6e6e6"/><rect x="51.00" y="223.50" width="254.60" height="26.50" fill="#e6e6e6"/><rect x="305.60" y="223.50" width="1177.56" height="26.50" fill="#d2d2d2"/><rect x="1483.16" y="223.50" width="105.84" height="26.50" fill="#e6e6e6"/><path d="M46.600 227.500V246.500H27.400Z" fill="#b4b4b4"/><path d="M50.50 225.50L50.50 250.00" stroke="#c9c9c9" stroke-width="1"/><path d="M305.60 225.50L305.60 250.00" stroke="#c9c9c9" stroke-width="1"/><path d="M403.73 225.50L403.73 250.00" stroke="#c4c4c4" stroke-width="1"/><path d="M501.86 225.50L501.86 250.00" stroke="#c4c4c4" stroke-width="1"/><path d="M599.99 225.50L599.99 250.00" stroke="#c4c4c4" stroke-width="1"/><path d="M698.12 225.50L698.12 250.00" stroke="#c4c4c4" stroke-width="1"/><path d="M796.25 225.50L796.25 250.00" stroke="#c4c4c4" stroke-width="1"/><path d="M894.38 225.50L894.38 250.00" stroke="#c4c4c4" stroke-width="1"/><path d="M992.51 225.50L992.51 250.00" stroke="#c4c4c4" stroke-width="1"/><path d="M1090.64 225.50L1090.64 250.00" stroke="#c4c4c4" stroke-width="1"/><path d="M1188.77 225.50L1188.77 250.00" stroke="#c4c4c4" stroke-width="1"/><path d="M1286.90 225.50L1286.90 250.00" stroke="#c4c4c4" stroke-width="1"/><path d="M1385.03 225.50L1385.03 250.00" stroke="#c4c4c4" stroke-width="1"/><path d="M1483.16 225.50L1483.16 250.00" stroke="#c4c4c4" stroke-width="1"/><rect x="10.00" y="250.00" width="41.00" height="33.50" fill="#e6e6e6"/><rect x="10.00" y="283.50" width="41.00" height="713.50" fill="#d2d2d2"/><rect x="10.00" y="997.00" width="41.00" height="6.00" fill="#e9e9e9"/><path d="M10.00 283.50L49.00 283.50" stroke="#bcbcbc" stroke-width="1"/><path d="M10.00 317.60L49.00 317.60" stroke="#bcbcbc" stroke-width="1"/><path d="M10.00 348.00L49.00 348.00" stroke="#bcbcbc" stroke-width="1"/><path d="M10.00 377.50L49.00 377.50" stroke="#bcbcbc" stroke-width="1"/><path d="M10.00 407.01L49.00 407.01" stroke="#bcbcbc" stroke-width="1"/><path d="M10.00 436.51L49.00 436.51" stroke="#bcbcbc" stroke-width="1"/><path d="M10.00 466.02L49.00 466.02" stroke="#bcbcbc" stroke-width="1"/><path d="M10.00 495.52L49.00 495.52" stroke="#bcbcbc" stroke-width="1"/><path d="M10.00 525.03L49.00 525.03" stroke="#bcbcbc" stroke-width="1"/><path d="M10.00 554.53L49.00 554.53" stroke="#bcbcbc" stroke-width="1"/><path d="M10.00 584.04L49.00 584.04" stroke="#bcbcbc" stroke-width="1"/><path d="M10.00 613.55L49.00 613.55" stroke="#bcbcbc" stroke-width="1"/><path d="M10.00 643.05L49.00 643.05" stroke="#bcbcbc" stroke-width="1"/><path d="M10.00 672.56L49.00 672.56" stroke="#bcbcbc" stroke-width="1"/><path d="M10.00 702.06L49.00 702.06" stroke="#bcbcbc" stroke-width="1"/><path d="M10.00 731.57L49.00 731.57" stroke="#bcbcbc" stroke-width="1"/><path d="M10.00 761.07L49.00 761.07" stroke="#bcbcbc" stroke-width="1"/><path d="M10.00 790.58L49.00 790.58" stroke="#bcbcbc" stroke-width="1"/><path d="M10.00 820.08L49.00 820.08" stroke="#bcbcbc" stroke-width="1"/><path d="M10.00 849.59L49.00 849.59" stroke="#bcbcbc" stroke-width="1"/><path d="M10.00 879.09L49.00 879.09" stroke="#bcbcbc" stroke-width="1"/><path d="M10.00 908.60L49.00 908.60" stroke="#bcbcbc" stroke-width="1"/><path d="M10.00 938.50L49.00 938.50" stroke="#bcbcbc" stroke-width="1"/><path d="M10.00 967.60L49.00 967.60" stroke="#bcbcbc" stroke-width="1"/><path d="M10.00 997.00L49.00 997.00" stroke="#bcbcbc" stroke-width="1"/><rect x="51.00" y="250.00" width="1538.00" height="67.60" fill="#50738f"/><rect x="403.73" y="283.50" width="1079.43" height="34.10" fill="#3f5b72"/><rect x="51.00" y="317.60" width="254.60" height="30.40" fill="#ececec"/><rect x="305.60" y="317.60" width="1177.56" height="30.40" fill="#b9b9b9"/><rect x="1483.16" y="317.60" width="105.84" height="30.40" fill="#ececec"/><rect x="51.00" y="348.00" width="254.60" height="29.50" fill="#fff"/><rect x="305.60" y="348.00" width="1177.56" height="29.50" fill="#c9c9c9"/><rect x="1483.16" y="348.00" width="105.84" height="29.50" fill="#fff"/><rect x="51.00" y="377.50" width="254.60" height="29.50" fill="#fff"/><rect x="305.60" y="377.50" width="1177.56" height="29.50" fill="#c9c9c9"/><rect x="1483.16" y="377.50" width="105.84" height="29.50" fill="#fff"/><rect x="51.00" y="407.01" width="254.60" height="29.50" fill="#fff"/><rect x="305.60" y="407.01" width="1177.56" height="29.50" fill="#c9c9c9"/><rect x="1483.16" y="407.01" width="105.84" height="29.50" fill="#fff"/><rect x="51.00" y="436.51" width="254.60" height="29.50" fill="#fff"/><rect x="305.60" y="436.51" width="1177.56" height="29.50" fill="#c9c9c9"/><rect x="1483.16" y="436.51" width="105.84" height="29.50" fill="#fff"/><rect x="51.00" y="466.02" width="254.60" height="29.50" fill="#ececec"/><rect x="305.60" y="466.02" width="1177.56" height="29.50" fill="#b9b9b9"/><rect x="1483.16" y="466.02" width="105.84" height="29.50" fill="#ececec"/><rect x="51.00" y="495.52" width="254.60" height="29.50" fill="#fff"/><rect x="305.60" y="495.52" width="1177.56" height="29.50" fill="#c9c9c9"/><rect x="1483.16" y="495.52" width="105.84" height="29.50" fill="#fff"/><rect x="51.00" y="525.03" width="254.60" height="29.50" fill="#fff"/><rect x="305.60" y="525.03" width="1177.56" height="29.50" fill="#c9c9c9"/><rect x="1483.16" y="525.03" width="105.84" height="29.50" fill="#fff"/><rect x="51.00" y="554.53" width="254.60" height="29.50" fill="#fff"/><rect x="305.60" y="554.53" width="1177.56" height="29.50" fill="#c9c9c9"/><rect x="1483.16" y="554.53" width="105.84" height="29.50" fill="#fff"/><rect x="51.00" y="584.04" width="254.60" height="29.51" fill="#ececec"/><rect x="305.60" y="584.04" width="1177.56" height="29.51" fill="#b9b9b9"/><rect x="1483.16" y="584.04" width="105.84" height="29.51" fill="#ececec"/><rect x="51.00" y="613.55" width="254.60" height="29.50" fill="#fff"/><rect x="305.60" y="613.55" width="1177.56" height="29.50" fill="#c9c9c9"/><rect x="1483.16" y="613.55" width="105.84" height="29.50" fill="#fff"/><rect x="51.00" y="643.05" width="254.60" height="29.51" fill="#fff"/><rect x="305.60" y="643.05" width="1177.56" height="29.51" fill="#c9c9c9"/><rect x="1483.16" y="643.05" width="105.84" height="29.51" fill="#fff"/><rect x="51.00" y="672.56" width="254.60" height="29.50" fill="#ececec"/><rect x="305.60" y="672.56" width="1177.56" height="29.50" fill="#b9b9b9"/><rect x="1483.16" y="672.56" width="105.84" height="29.50" fill="#ececec"/><rect x="51.00" y="702.06" width="254.60" height="29.51" fill="#ececec"/><rect x="305.60" y="702.06" width="1177.56" height="29.51" fill="#b9b9b9"/><rect x="1483.16" y="702.06" width="105.84" height="29.51" fill="#ececec"/><rect x="51.00" y="731.57" width="254.60" height="29.50" fill="#ececec"/><rect x="305.60" y="731.57" width="1177.56" height="29.50" fill="#b9b9b9"/><rect x="1483.16" y="731.57" width="105.84" height="29.50" fill="#ececec"/><rect x="51.00" y="761.07" width="254.60" height="29.51" fill="#ececec"/><rect x="305.60" y="761.07" width="1177.56" height="29.51" fill="#b9b9b9"/><rect x="1483.16" y="761.07" width="105.84" height="29.51" fill="#ececec"/><rect x="51.00" y="790.58" width="254.60" height="29.50" fill="#ececec"/><rect x="305.60" y="790.58" width="1177.56" height="29.50" fill="#b9b9b9"/><rect x="1483.16" y="790.58" width="105.84" height="29.50" fill="#ececec"/><rect x="51.00" y="820.08" width="254.60" height="29.51" fill="#ececec"/><rect x="305.60" y="820.08" width="1177.56" height="29.51" fill="#b9b9b9"/><rect x="1483.16" y="820.08" width="105.84" height="29.51" fill="#ececec"/><rect x="51.00" y="849.59" width="254.60" height="29.50" fill="#ececec"/><rect x="305.60" y="849.59" width="1177.56" height="29.50" fill="#b9b9b9"/><rect x="1483.16" y="849.59" width="105.84" height="29.50" fill="#ececec"/><rect x="51.00" y="879.09" width="254.60" height="29.50" fill="#ececec"/><rect x="305.60" y="879.09" width="1177.56" height="29.50" fill="#b9b9b9"/><rect x="1483.16" y="879.09" width="105.84" height="29.50" fill="#ececec"/><rect x="51.00" y="908.60" width="254.60" height="29.90" fill="#fff"/><rect x="305.60" y="908.60" width="1177.56" height="29.90" fill="#c9c9c9"/><rect x="1483.16" y="908.60" width="105.84" height="29.90" fill="#fff"/><rect x="305.60" y="938.50" width="1177.56" height="58.50" fill="#c7c7c7"/><path d="M51.00 348.00L305.60 348.00" stroke="#6a6a6a" stroke-width="2.3"/><path d="M305.60 348.00L1483.16 348.00" stroke="#5e5e5e" stroke-width="2.3"/><path d="M1483.16 348.00L1589.00 348.00" stroke="#707070" stroke-width="2"/><path d="M51.00 377.50L305.60 377.50" stroke="#6a6a6a" stroke-width="2.3"/><path d="M305.60 377.50L1483.16 377.50" stroke="#5e5e5e" stroke-width="2.3"/><path d="M1483.16 377.50L1589.00 377.50" stroke="#707070" stroke-width="2"/><path d="M51.00 407.01L305.60 407.01" stroke="#6a6a6a" stroke-width="2.3"/><path d="M305.60 407.01L1483.16 407.01" stroke="#5e5e5e" stroke-width="2.3"/><path d="M1483.16 407.01L1589.00 407.01" stroke="#707070" stroke-width="2"/><path d="M51.00 436.51L305.60 436.51" stroke="#6a6a6a" stroke-width="2.3"/><path d="M305.60 436.51L1483.16 436.51" stroke="#5e5e5e" stroke-width="2.3"/><path d="M1483.16 436.51L1589.00 436.51" stroke="#707070" stroke-width="2"/><path d="M51.00 466.02L305.60 466.02" stroke="#6a6a6a" stroke-width="2.3"/><path d="M305.60 466.02L1483.16 466.02" stroke="#5e5e5e" stroke-width="2.3"/><path d="M1483.16 466.02L1589.00 466.02" stroke="#707070" stroke-width="2"/><path d="M51.00 495.52L305.60 495.52" stroke="#6a6a6a" stroke-width="2.3"/><path d="M305.60 495.52L1483.16 495.52" stroke="#5e5e5e" stroke-width="2.3"/><path d="M1483.16 495.52L1589.00 495.52" stroke="#707070" stroke-width="2"/><path d="M51.00 525.03L305.60 525.03" stroke="#6a6a6a" stroke-width="2.3"/><path d="M305.60 525.03L1483.16 525.03" stroke="#5e5e5e" stroke-width="2.3"/><path d="M1483.16 525.03L1589.00 525.03" stroke="#707070" stroke-width="2"/><path d="M51.00 554.53L305.60 554.53" stroke="#6a6a6a" stroke-width="2.3"/><path d="M305.60 554.53L1483.16 554.53" stroke="#5e5e5e" stroke-width="2.3"/><path d="M1483.16 554.53L1589.00 554.53" stroke="#707070" stroke-width="2"/><path d="M51.00 584.04L305.60 584.04" stroke="#6a6a6a" stroke-width="2.3"/><path d="M305.60 584.04L1483.16 584.04" stroke="#5e5e5e" stroke-width="2.3"/><path d="M1483.16 584.04L1589.00 584.04" stroke="#707070" stroke-width="2"/><path d="M51.00 613.55L305.60 613.55" stroke="#6a6a6a" stroke-width="2.3"/><path d="M305.60 613.55L1483.16 613.55" stroke="#5e5e5e" stroke-width="2.3"/><path d="M1483.16 613.55L1589.00 613.55" stroke="#707070" stroke-width="2"/><path d="M51.00 643.05L305.60 643.05" stroke="#6a6a6a" stroke-width="2.3"/><path d="M305.60 643.05L1483.16 643.05" stroke="#5e5e5e" stroke-width="2.3"/><path d="M1483.16 643.05L1589.00 643.05" stroke="#707070" stroke-width="2"/><path d="M51.00 672.56L305.60 672.56" stroke="#6a6a6a" stroke-width="2.3"/><path d="M305.60 672.56L1483.16 672.56" stroke="#5e5e5e" stroke-width="2.3"/><path d="M1483.16 672.56L1589.00 672.56" stroke="#707070" stroke-width="2"/><path d="M51.00 702.06L305.60 702.06" stroke="#6a6a6a" stroke-width="2.3"/><path d="M305.60 702.06L1483.16 702.06" stroke="#5e5e5e" stroke-width="2.3"/><path d="M1483.16 702.06L1589.00 702.06" stroke="#707070" stroke-width="2"/><path d="M51.00 731.57L305.60 731.57" stroke="#6a6a6a" stroke-width="2.3"/><path d="M305.60 731.57L1483.16 731.57" stroke="#5e5e5e" stroke-width="2.3"/><path d="M1483.16 731.57L1589.00 731.57" stroke="#707070" stroke-width="2"/><path d="M51.00 761.07L305.60 761.07" stroke="#6a6a6a" stroke-width="2.3"/><path d="M305.60 761.07L1483.16 761.07" stroke="#5e5e5e" stroke-width="2.3"/><path d="M1483.16 761.07L1589.00 761.07" stroke="#707070" stroke-width="2"/><path d="M51.00 790.58L305.60 790.58" stroke="#6a6a6a" stroke-width="2.3"/><path d="M305.60 790.58L1483.16 790.58" stroke="#5e5e5e" stroke-width="2.3"/><path d="M1483.16 790.58L1589.00 790.58" stroke="#707070" stroke-width="2"/><path d="M51.00 820.08L305.60 820.08" stroke="#6a6a6a" stroke-width="2.3"/><path d="M305.60 820.08L1483.16 820.08" stroke="#5e5e5e" stroke-width="2.3"/><path d="M1483.16 820.08L1589.00 820.08" stroke="#707070" stroke-width="2"/><path d="M51.00 849.59L305.60 849.59" stroke="#6a6a6a" stroke-width="2.3"/><path d="M305.60 849.59L1483.16 849.59" stroke="#5e5e5e" stroke-width="2.3"/><path d="M1483.16 849.59L1589.00 849.59" stroke="#707070" stroke-width="2"/><path d="M51.00 879.09L305.60 879.09" stroke="#6a6a6a" stroke-width="2.3"/><path d="M305.60 879.09L1483.16 879.09" stroke="#5e5e5e" stroke-width="2.3"/><path d="M1483.16 879.09L1589.00 879.09" stroke="#707070" stroke-width="2"/><path d="M51.00 908.60L305.60 908.60" stroke="#6a6a6a" stroke-width="2.3"/><path d="M305.60 908.60L1483.16 908.60" stroke="#5e5e5e" stroke-width="2.3"/><path d="M1483.16 908.60L1589.00 908.60" stroke="#707070" stroke-width="2"/><path d="M51.00 938.50L305.60 938.50" stroke="#6a6a6a" stroke-width="2.3"/><path d="M305.60 938.50L1483.16 938.50" stroke="#5e5e5e" stroke-width="2.3"/><path d="M1483.16 938.50L1589.00 938.50" stroke="#707070" stroke-width="2"/><path d="M403.73 317.60L403.73 938.50" stroke="#3c3c3c" stroke-width="2"/><path d="M403.73 250.00L403.73 317.60" stroke="#2a4258" stroke-width="2"/><path d="M501.86 317.60L501.86 938.50" stroke="#3c3c3c" stroke-width="2"/><path d="M501.86 250.00L501.86 317.60" stroke="#2a4258" stroke-width="2"/><path d="M599.99 317.60L599.99 938.50" stroke="#3c3c3c" stroke-width="2"/><path d="M599.99 250.00L599.99 317.60" stroke="#2a4258" stroke-width="2"/><path d="M698.12 317.60L698.12 938.50" stroke="#3c3c3c" stroke-width="2"/><path d="M698.12 250.00L698.12 317.60" stroke="#2a4258" stroke-width="2"/><path d="M796.25 317.60L796.25 938.50" stroke="#3c3c3c" stroke-width="2"/><path d="M796.25 250.00L796.25 317.60" stroke="#2a4258" stroke-width="2"/><path d="M894.38 317.60L894.38 938.50" stroke="#3c3c3c" stroke-width="2"/><path d="M894.38 250.00L894.38 317.60" stroke="#2a4258" stroke-width="2"/><path d="M992.51 317.60L992.51 938.50" stroke="#3c3c3c" stroke-width="2"/><path d="M992.51 250.00L992.51 317.60" stroke="#2a4258" stroke-width="2"/><path d="M1090.64 317.60L1090.64 938.50" stroke="#3c3c3c" stroke-width="2"/><path d="M1090.64 250.00L1090.64 317.60" stroke="#2a4258" stroke-width="2"/><path d="M1188.77 317.60L1188.77 938.50" stroke="#3c3c3c" stroke-width="2"/><path d="M1188.77 250.00L1188.77 317.60" stroke="#2a4258" stroke-width="2"/><path d="M1286.90 317.60L1286.90 938.50" stroke="#3c3c3c" stroke-width="2"/><path d="M1286.90 250.00L1286.90 317.60" stroke="#2a4258" stroke-width="2"/><path d="M1385.03 317.60L1385.03 938.50" stroke="#3c3c3c" stroke-width="2"/><path d="M1385.03 250.00L1385.03 317.60" stroke="#2a4258" stroke-width="2"/><path d="M305.60 250.00L305.60 283.50" stroke="#22384c" stroke-width="1.2"/><path d="M1483.16 250.00L1483.16 283.50" stroke="#22384c" stroke-width="1.2"/><path d="M51.00 283.50L305.60 283.50" stroke="#2b4257" stroke-width="1.5"/><path d="M1483.16 283.50L1589.00 283.50" stroke="#2b4257" stroke-width="1.2"/><path d="M1588.50 317.60L1588.50 938.50" stroke="#9a9a9a" stroke-width="1"/><rect x="287.00" y="265.00" width="17.60" height="17.00" fill="#fdfdfd"/><path d="M291.80 272.300h7.600l-3.800 4.200z" fill="#404040"/><rect x="385.13" y="265.00" width="17.60" height="17.00" fill="#fdfdfd"/><path d="M389.93 272.300h7.600l-3.800 4.200z" fill="#404040"/><rect x="483.26" y="265.00" width="17.60" height="17.00" fill="#fdfdfd"/><path d="M488.06 272.300h7.600l-3.800 4.200z" fill="#404040"/><rect x="581.39" y="265.00" width="17.60" height="17.00" fill="#fdfdfd"/><path d="M586.19 272.300h7.600l-3.800 4.200z" fill="#404040"/><rect x="679.52" y="265.00" width="17.60" height="17.00" fill="#fdfdfd"/><path d="M684.32 272.300h7.600l-3.800 4.200z" fill="#404040"/><rect x="777.65" y="265.00" width="17.60" height="17.00" fill="#fdfdfd"/><path d="M782.45 272.300h7.600l-3.800 4.200z" fill="#404040"/><rect x="875.78" y="265.00" width="17.60" height="17.00" fill="#fdfdfd"/><path d="M880.58 272.300h7.600l-3.800 4.200z" fill="#404040"/><rect x="973.91" y="265.00" width="17.60" height="17.00" fill="#fdfdfd"/><path d="M978.71 272.300h7.600l-3.800 4.200z" fill="#404040"/><rect x="1072.04" y="265.00" width="17.60" height="17.00" fill="#fdfdfd"/><path d="M1076.84 272.300h7.600l-3.800 4.200z" fill="#404040"/><rect x="1170.17" y="265.00" width="17.60" height="17.00" fill="#fdfdfd"/><path d="M1174.97 272.300h7.600l-3.800 4.200z" fill="#404040"/><rect x="1268.30" y="265.00" width="17.60" height="17.00" fill="#fdfdfd"/><path d="M1273.10 272.300h7.600l-3.800 4.200z" fill="#404040"/><rect x="1366.43" y="265.00" width="17.60" height="17.00" fill="#fdfdfd"/><path d="M1371.23 272.300h7.600l-3.800 4.200z" fill="#404040"/><rect x="1464.56" y="265.00" width="17.60" height="17.00" fill="#fdfdfd"/><path d="M1469.36 272.300h7.600l-3.800 4.200z" fill="#404040"/><rect x="1570.40" y="265.00" width="17.60" height="17.00" fill="#fdfdfd"/><path d="M1575.20 272.300h7.600l-3.800 4.200z" fill="#404040"/><path d="M305.60 250.00L1483.16 250.00" stroke="#2e7d54" stroke-width="2.2"/><path d="M49.80 283.50L49.80 997.00" stroke="#4a9068" stroke-width="2.6"/><rect x="305.60" y="283.50" width="1177.56" height="713.50" fill="none" stroke="#3d8a61" stroke-width="2.400"/><rect x="307.60" y="285.50" width="95.63" height="31.60" fill="none" stroke="#dfe9e4" stroke-width="1.100"/><rect x="1480.16" y="994.00" width="6.20" height="6.20" fill="#fff"/><rect x="1481.16" y="995.00" width="4.80" height="4.80" fill="#1e6e42"/></svg>
<div class="t" style="left:-21.7px;top:223.45px;width:400px;height:29px;line-height:29px;font-size:22.5px;color:#333;text-align:center;">A</div>
<div class="t" style="left:154.665px;top:223.45px;width:400px;height:29px;line-height:29px;font-size:22.5px;color:#2a6e4a;text-align:center;">B</div>
<div class="t" style="left:252.795px;top:223.45px;width:400px;height:29px;line-height:29px;font-size:22.5px;color:#2a6e4a;text-align:center;">C</div>
<div class="t" style="left:350.925px;top:223.45px;width:400px;height:29px;line-height:29px;font-size:22.5px;color:#2a6e4a;text-align:center;">D</div>
<div class="t" style="left:449.055px;top:223.45px;width:400px;height:29px;line-height:29px;font-size:22.5px;color:#2a6e4a;text-align:center;">E</div>
<div class="t" style="left:547.185px;top:223.45px;width:400px;height:29px;line-height:29px;font-size:22.5px;color:#2a6e4a;text-align:center;">F</div>
<div class="t" style="left:645.315px;top:223.45px;width:400px;height:29px;line-height:29px;font-size:22.5px;color:#2a6e4a;text-align:center;">G</div>
<div class="t" style="left:743.445px;top:223.45px;width:400px;height:29px;line-height:29px;font-size:22.5px;color:#2a6e4a;text-align:center;">H</div>
<div class="t" style="left:841.575px;top:223.45px;width:400px;height:29px;line-height:29px;font-size:22.5px;color:#2a6e4a;text-align:center;">I</div>
<div class="t" style="left:939.705px;top:223.45px;width:400px;height:29px;line-height:29px;font-size:22.5px;color:#2a6e4a;text-align:center;">J</div>
<div class="t" style="left:1037.84px;top:223.45px;width:400px;height:29px;line-height:29px;font-size:22.5px;color:#2a6e4a;text-align:center;">K</div>
<div class="t" style="left:1135.96px;top:223.45px;width:400px;height:29px;line-height:29px;font-size:22.5px;color:#2a6e4a;text-align:center;">L</div>
<div class="t" style="left:1234.09px;top:223.45px;width:400px;height:29px;line-height:29px;font-size:22.5px;color:#2a6e4a;text-align:center;">M</div>
<div class="t" style="left:1336.08px;top:223.45px;width:400px;height:29px;line-height:29px;font-size:22.5px;color:#333;text-align:center;">N</div>
<div class="t" style="left:10.3px;top:256.8px;width:40px;height:29px;line-height:29px;font-size:22px;color:#333;text-align:center;letter-spacing:-.5px;">1</div>
<div class="t" style="left:10.3px;top:290.9px;width:40px;height:29px;line-height:29px;font-size:22px;color:#2a6e4a;text-align:center;letter-spacing:-.5px;">2</div>
<div class="t" style="left:10.3px;top:321.3px;width:40px;height:29px;line-height:29px;font-size:22px;color:#2a6e4a;text-align:center;letter-spacing:-.5px;">3</div>
<div class="t" style="left:10.3px;top:350.805px;width:40px;height:29px;line-height:29px;font-size:22px;color:#2a6e4a;text-align:center;letter-spacing:-.5px;">4</div>
<div class="t" style="left:10.3px;top:380.31px;width:40px;height:29px;line-height:29px;font-size:22px;color:#2a6e4a;text-align:center;letter-spacing:-.5px;">5</div>
<div class="t" style="left:10.3px;top:409.815px;width:40px;height:29px;line-height:29px;font-size:22px;color:#2a6e4a;text-align:center;letter-spacing:-.5px;">6</div>
<div class="t" style="left:10.3px;top:439.32px;width:40px;height:29px;line-height:29px;font-size:22px;color:#2a6e4a;text-align:center;letter-spacing:-.5px;">7</div>
<div class="t" style="left:10.3px;top:468.825px;width:40px;height:29px;line-height:29px;font-size:22px;color:#2a6e4a;text-align:center;letter-spacing:-.5px;">8</div>
<div class="t" style="left:10.3px;top:498.33px;width:40px;height:29px;line-height:29px;font-size:22px;color:#2a6e4a;text-align:center;letter-spacing:-.5px;">9</div>
<div class="t" style="left:10.3px;top:527.835px;width:40px;height:29px;line-height:29px;font-size:22px;color:#2a6e4a;text-align:center;letter-spacing:-.5px;">10</div>
<div class="t" style="left:10.3px;top:557.34px;width:40px;height:29px;line-height:29px;font-size:22px;color:#2a6e4a;text-align:center;letter-spacing:-.5px;">11</div>
<div class="t" style="left:10.3px;top:586.845px;width:40px;height:29px;line-height:29px;font-size:22px;color:#2a6e4a;text-align:center;letter-spacing:-.5px;">12</div>
<div class="t" style="left:10.3px;top:616.35px;width:40px;height:29px;line-height:29px;font-size:22px;color:#2a6e4a;text-align:center;letter-spacing:-.5px;">13</div>
<div class="t" style="left:10.3px;top:645.855px;width:40px;height:29px;line-height:29px;font-size:22px;color:#2a6e4a;text-align:center;letter-spacing:-.5px;">14</div>
<div class="t" style="left:10.3px;top:675.36px;width:40px;height:29px;line-height:29px;font-size:22px;color:#2a6e4a;text-align:center;letter-spacing:-.5px;">15</div>
<div class="t" style="left:10.3px;top:704.865px;width:40px;height:29px;line-height:29px;font-size:22px;color:#2a6e4a;text-align:center;letter-spacing:-.5px;">16</div>
<div class="t" style="left:10.3px;top:734.37px;width:40px;height:29px;line-height:29px;font-size:22px;color:#2a6e4a;text-align:center;letter-spacing:-.5px;">17</div>
<div class="t" style="left:10.3px;top:763.875px;width:40px;height:29px;line-height:29px;font-size:22px;color:#2a6e4a;text-align:center;letter-spacing:-.5px;">18</div>
<div class="t" style="left:10.3px;top:793.38px;width:40px;height:29px;line-height:29px;font-size:22px;color:#2a6e4a;text-align:center;letter-spacing:-.5px;">19</div>
<div class="t" style="left:10.3px;top:822.885px;width:40px;height:29px;line-height:29px;font-size:22px;color:#2a6e4a;text-align:center;letter-spacing:-.5px;">20</div>
<div class="t" style="left:10.3px;top:852.39px;width:40px;height:29px;line-height:29px;font-size:22px;color:#2a6e4a;text-align:center;letter-spacing:-.5px;">21</div>
<div class="t" style="left:10.3px;top:881.895px;width:40px;height:29px;line-height:29px;font-size:22px;color:#2a6e4a;text-align:center;letter-spacing:-.5px;">22</div>
<div class="t" style="left:10.3px;top:911.8px;width:40px;height:29px;line-height:29px;font-size:22px;color:#2a6e4a;text-align:center;letter-spacing:-.5px;">23</div>
<div class="t" style="left:10.3px;top:940.9px;width:40px;height:29px;line-height:29px;font-size:22px;color:#2a6e4a;text-align:center;letter-spacing:-.5px;">24</div>
<div class="t" style="left:10.3px;top:970.3px;width:40px;height:29px;line-height:29px;font-size:22px;color:#2a6e4a;text-align:center;letter-spacing:-.5px;">25</div>
<div class="t" style="left:-21.7px;top:254.75px;width:400px;height:26px;line-height:26px;font-size:20.2px;color:#fff;text-align:center;font-weight:bold;">月份</div>
<div class="t" style="left:310.165px;top:254.75px;width:90px;height:26px;line-height:26px;font-size:20.2px;color:#fff;text-align:center;font-weight:bold;">1月</div>
<div class="t" style="left:408.295px;top:254.75px;width:90px;height:26px;line-height:26px;font-size:20.2px;color:#fff;text-align:center;font-weight:bold;">2月</div>
<div class="t" style="left:506.425px;top:254.75px;width:90px;height:26px;line-height:26px;font-size:20.2px;color:#fff;text-align:center;font-weight:bold;">3月</div>
<div class="t" style="left:604.555px;top:254.75px;width:90px;height:26px;line-height:26px;font-size:20.2px;color:#fff;text-align:center;font-weight:bold;">4月</div>
<div class="t" style="left:702.685px;top:254.75px;width:90px;height:26px;line-height:26px;font-size:20.2px;color:#fff;text-align:center;font-weight:bold;">5月</div>
<div class="t" style="left:800.815px;top:254.75px;width:90px;height:26px;line-height:26px;font-size:20.2px;color:#fff;text-align:center;font-weight:bold;">6月</div>
<div class="t" style="left:898.945px;top:254.75px;width:90px;height:26px;line-height:26px;font-size:20.2px;color:#fff;text-align:center;font-weight:bold;">7月</div>
<div class="t" style="left:997.075px;top:254.75px;width:90px;height:26px;line-height:26px;font-size:20.2px;color:#fff;text-align:center;font-weight:bold;">8月</div>
<div class="t" style="left:1095.2px;top:254.75px;width:90px;height:26px;line-height:26px;font-size:20.2px;color:#fff;text-align:center;font-weight:bold;">9月</div>
<div class="t" style="left:1193.34px;top:254.75px;width:90px;height:26px;line-height:26px;font-size:20.2px;color:#fff;text-align:center;font-weight:bold;">10月</div>
<div class="t" style="left:1291.46px;top:254.75px;width:90px;height:26px;line-height:26px;font-size:20.2px;color:#fff;text-align:center;font-weight:bold;">11月</div>
<div class="t" style="left:1389.59px;top:254.75px;width:90px;height:26px;line-height:26px;font-size:20.2px;color:#fff;text-align:center;font-weight:bold;">12月</div>
<div class="t" style="left:1336.08px;top:254.75px;width:400px;height:26px;line-height:26px;font-size:20.2px;color:#fff;text-align:center;font-weight:bold;">合计</div>
<div class="t" style="left:-27.2px;top:289.95px;width:400px;height:26px;line-height:26px;font-size:20.2px;color:#fff;text-align:center;font-weight:bold;">预算产量(台)</div>
<div class="t" style="left:306.665px;top:286.05px;width:96px;height:27px;line-height:27px;font-size:21px;color:#fff;text-align:center;font-weight:bold;letter-spacing:1.1px;">7369</div>
<div class="t" style="left:404.795px;top:286.05px;width:96px;height:27px;line-height:27px;font-size:21px;color:#d2d6da;text-align:center;font-weight:bold;letter-spacing:1.1px;">7796</div>
<div class="t" style="left:502.925px;top:286.05px;width:96px;height:27px;line-height:27px;font-size:21px;color:#d2d6da;text-align:center;font-weight:bold;letter-spacing:1.1px;">6365</div>
<div class="t" style="left:601.055px;top:286.05px;width:96px;height:27px;line-height:27px;font-size:21px;color:#d2d6da;text-align:center;font-weight:bold;letter-spacing:1.1px;">8164</div>
<div class="t" style="left:699.185px;top:286.05px;width:96px;height:27px;line-height:27px;font-size:21px;color:#d2d6da;text-align:center;font-weight:bold;letter-spacing:1.1px;">7647</div>
<div class="t" style="left:797.315px;top:286.05px;width:96px;height:27px;line-height:27px;font-size:21px;color:#d2d6da;text-align:center;font-weight:bold;letter-spacing:1.1px;">7772</div>
<div class="t" style="left:895.445px;top:286.05px;width:96px;height:27px;line-height:27px;font-size:21px;color:#d2d6da;text-align:center;font-weight:bold;letter-spacing:1.1px;">7647</div>
<div class="t" style="left:993.575px;top:286.05px;width:96px;height:27px;line-height:27px;font-size:21px;color:#d2d6da;text-align:center;font-weight:bold;letter-spacing:1.1px;">8176</div>
<div class="t" style="left:1091.7px;top:286.05px;width:96px;height:27px;line-height:27px;font-size:21px;color:#d2d6da;text-align:center;font-weight:bold;letter-spacing:1.1px;">6697</div>
<div class="t" style="left:1189.84px;top:286.05px;width:96px;height:27px;line-height:27px;font-size:21px;color:#d2d6da;text-align:center;font-weight:bold;letter-spacing:1.1px;">8193</div>
<div class="t" style="left:1287.96px;top:286.05px;width:96px;height:27px;line-height:27px;font-size:21px;color:#d2d6da;text-align:center;font-weight:bold;letter-spacing:1.1px;">6429</div>
<div class="t" style="left:1386.09px;top:286.05px;width:96px;height:27px;line-height:27px;font-size:21px;color:#d2d6da;text-align:center;font-weight:bold;letter-spacing:1.1px;">6522</div>
<div class="t" style="left:1336.08px;top:286.05px;width:400px;height:27px;line-height:27px;font-size:21px;color:#fff;text-align:center;font-weight:bold;letter-spacing:1.1px;">88777</div>
<div class="t f" style="left:54.5px;top:322.4px;width:250px;height:27px;line-height:27px;font-size:20.5px;color:#111;text-align:left;font-weight:bold;letter-spacing:.03em;">工资及工资性费用</div>
<div class="t f" style="left:306.665px;top:320.9px;width:96px;height:27px;line-height:27px;font-size:21px;color:#111;text-align:center;font-weight:bold;letter-spacing:.6px;">884</div>
<div class="t f" style="left:404.795px;top:320.9px;width:96px;height:27px;line-height:27px;font-size:21px;color:#111;text-align:center;font-weight:bold;letter-spacing:.6px;">913</div>
<div class="t f" style="left:502.925px;top:320.9px;width:96px;height:27px;line-height:27px;font-size:21px;color:#111;text-align:center;font-weight:bold;letter-spacing:.6px;">912</div>
<div class="t f" style="left:601.055px;top:320.9px;width:96px;height:27px;line-height:27px;font-size:21px;color:#111;text-align:center;font-weight:bold;letter-spacing:.6px;">896</div>
<div class="t f" style="left:699.185px;top:320.9px;width:96px;height:27px;line-height:27px;font-size:21px;color:#111;text-align:center;font-weight:bold;letter-spacing:.6px;">904</div>
<div class="t f" style="left:797.315px;top:320.9px;width:96px;height:27px;line-height:27px;font-size:21px;color:#111;text-align:center;font-weight:bold;letter-spacing:.6px;">907</div>
<div class="t f" style="left:895.445px;top:320.9px;width:96px;height:27px;line-height:27px;font-size:21px;color:#111;text-align:center;font-weight:bold;letter-spacing:.6px;">856</div>
<div class="t f" style="left:993.575px;top:320.9px;width:96px;height:27px;line-height:27px;font-size:21px;color:#111;text-align:center;font-weight:bold;letter-spacing:.6px;">902</div>
<div class="t f" style="left:1091.7px;top:320.9px;width:96px;height:27px;line-height:27px;font-size:21px;color:#111;text-align:center;font-weight:bold;letter-spacing:.6px;">892</div>
<div class="t f" style="left:1189.84px;top:320.9px;width:96px;height:27px;line-height:27px;font-size:21px;color:#111;text-align:center;font-weight:bold;letter-spacing:.6px;">885</div>
<div class="t f" style="left:1287.96px;top:320.9px;width:96px;height:27px;line-height:27px;font-size:21px;color:#111;text-align:center;font-weight:bold;letter-spacing:.6px;">911</div>
<div class="t f" style="left:1386.09px;top:320.9px;width:96px;height:27px;line-height:27px;font-size:21px;color:#111;text-align:center;font-weight:bold;letter-spacing:.6px;">885</div>
<div class="t f" style="left:1331.08px;top:320.9px;width:400px;height:27px;line-height:27px;font-size:21px;color:#111;text-align:center;font-weight:bold;letter-spacing:.8px;">10, 747</div>
<div class="t f" style="left:73.5px;top:351.653px;width:230px;height:25px;line-height:25px;font-size:19.6px;color:#555;text-align:left;">直接人工工资</div>
<div class="t f" style="left:306.665px;top:350.853px;width:96px;height:27px;line-height:27px;font-size:20.5px;color:#333;text-align:center;">217</div>
<div class="t f" style="left:404.795px;top:350.853px;width:96px;height:27px;line-height:27px;font-size:20.5px;color:#333;text-align:center;">224</div>
<div class="t f" style="left:502.925px;top:350.853px;width:96px;height:27px;line-height:27px;font-size:20.5px;color:#333;text-align:center;">226</div>
<div class="t f" style="left:601.055px;top:350.853px;width:96px;height:27px;line-height:27px;font-size:20.5px;color:#333;text-align:center;">228</div>
<div class="t f" style="left:699.185px;top:350.853px;width:96px;height:27px;line-height:27px;font-size:20.5px;color:#333;text-align:center;">222</div>
<div class="t f" style="left:797.315px;top:350.853px;width:96px;height:27px;line-height:27px;font-size:20.5px;color:#333;text-align:center;">205</div>
<div class="t f" style="left:895.445px;top:350.853px;width:96px;height:27px;line-height:27px;font-size:20.5px;color:#333;text-align:center;">221</div>
<div class="t f" style="left:993.575px;top:350.853px;width:96px;height:27px;line-height:27px;font-size:20.5px;color:#333;text-align:center;">246</div>
<div class="t f" style="left:1091.7px;top:350.853px;width:96px;height:27px;line-height:27px;font-size:20.5px;color:#333;text-align:center;">217</div>
<div class="t f" style="left:1189.84px;top:350.853px;width:96px;height:27px;line-height:27px;font-size:20.5px;color:#333;text-align:center;">219</div>
<div class="t f" style="left:1287.96px;top:350.853px;width:96px;height:27px;line-height:27px;font-size:20.5px;color:#333;text-align:center;">203</div>
<div class="t f" style="left:1386.09px;top:350.853px;width:96px;height:27px;line-height:27px;font-size:20.5px;color:#333;text-align:center;">239</div>
<div class="t f" style="left:1331.58px;top:350.853px;width:400px;height:27px;line-height:27px;font-size:20.5px;color:#333;text-align:center;letter-spacing:.5px;">2, 667</div>
<div class="t f" style="left:73.5px;top:381.158px;width:230px;height:25px;line-height:25px;font-size:19.6px;color:#555;text-align:left;">直接人工工资性费用</div>
<div class="t f" style="left:306.665px;top:380.358px;width:96px;height:27px;line-height:27px;font-size:20.5px;color:#333;text-align:center;">203</div>
<div class="t f" style="left:404.795px;top:380.358px;width:96px;height:27px;line-height:27px;font-size:20.5px;color:#333;text-align:center;">229</div>
<div class="t f" style="left:502.925px;top:380.358px;width:96px;height:27px;line-height:27px;font-size:20.5px;color:#333;text-align:center;">228</div>
<div class="t f" style="left:601.055px;top:380.358px;width:96px;height:27px;line-height:27px;font-size:20.5px;color:#333;text-align:center;">213</div>
<div class="t f" style="left:699.185px;top:380.358px;width:96px;height:27px;line-height:27px;font-size:20.5px;color:#333;text-align:center;">214</div>
<div class="t f" style="left:797.315px;top:380.358px;width:96px;height:27px;line-height:27px;font-size:20.5px;color:#333;text-align:center;">237</div>
<div class="t f" style="left:895.445px;top:380.358px;width:96px;height:27px;line-height:27px;font-size:20.5px;color:#333;text-align:center;">213</div>
<div class="t f" style="left:993.575px;top:380.358px;width:96px;height:27px;line-height:27px;font-size:20.5px;color:#333;text-align:center;">205</div>
<div class="t f" style="left:1091.7px;top:380.358px;width:96px;height:27px;line-height:27px;font-size:20.5px;color:#333;text-align:center;">214</div>
<div class="t f" style="left:1189.84px;top:380.358px;width:96px;height:27px;line-height:27px;font-size:20.5px;color:#333;text-align:center;">215</div>
<div class="t f" style="left:1287.96px;top:380.358px;width:96px;height:27px;line-height:27px;font-size:20.5px;color:#333;text-align:center;">241</div>
<div class="t f" style="left:1386.09px;top:380.358px;width:96px;height:27px;line-height:27px;font-size:20.5px;color:#333;text-align:center;">220</div>
<div class="t f" style="left:1331.58px;top:380.358px;width:400px;height:27px;line-height:27px;font-size:20.5px;color:#333;text-align:center;letter-spacing:.5px;">2, 632</div>
<div class="t f" style="left:73.5px;top:410.663px;width:230px;height:25px;line-height:25px;font-size:19.6px;color:#555;text-align:left;">间接人工工资</div>
<div class="t f" style="left:306.665px;top:409.863px;width:96px;height:27px;line-height:27px;font-size:20.5px;color:#333;text-align:center;">236</div>
<div class="t f" style="left:404.795px;top:409.863px;width:96px;height:27px;line-height:27px;font-size:20.5px;color:#333;text-align:center;">221</div>
<div class="t f" style="left:502.925px;top:409.863px;width:96px;height:27px;line-height:27px;font-size:20.5px;color:#333;text-align:center;">230</div>
<div class="t f" style="left:601.055px;top:409.863px;width:96px;height:27px;line-height:27px;font-size:20.5px;color:#333;text-align:center;">226</div>
<div class="t f" style="left:699.185px;top:409.863px;width:96px;height:27px;line-height:27px;font-size:20.5px;color:#333;text-align:center;">219</div>
<div class="t f" style="left:797.315px;top:409.863px;width:96px;height:27px;line-height:27px;font-size:20.5px;color:#333;text-align:center;">233</div>
<div class="t f" style="left:895.445px;top:409.863px;width:96px;height:27px;line-height:27px;font-size:20.5px;color:#333;text-align:center;">228</div>
<div class="t f" style="left:993.575px;top:409.863px;width:96px;height:27px;line-height:27px;font-size:20.5px;color:#333;text-align:center;">224</div>
<div class="t f" style="left:1091.7px;top:409.863px;width:96px;height:27px;line-height:27px;font-size:20.5px;color:#333;text-align:center;">231</div>
<div class="t f" style="left:1189.84px;top:409.863px;width:96px;height:27px;line-height:27px;font-size:20.5px;color:#333;text-align:center;">222</div>
<div class="t f" style="left:1287.96px;top:409.863px;width:96px;height:27px;line-height:27px;font-size:20.5px;color:#333;text-align:center;">229</div>
<div class="t f" style="left:1386.09px;top:409.863px;width:96px;height:27px;line-height:27px;font-size:20.5px;color:#333;text-align:center;">228</div>
<div class="t f" style="left:1331.58px;top:409.863px;width:400px;height:27px;line-height:27px;font-size:20.5px;color:#333;text-align:center;letter-spacing:.5px;">2, 727</div>
<div class="t f" style="left:73.5px;top:440.168px;width:230px;height:25px;line-height:25px;font-size:19.6px;color:#555;text-align:left;">间接人工工资性费用</div>
<div class="t f" style="left:306.665px;top:439.368px;width:96px;height:27px;line-height:27px;font-size:20.5px;color:#333;text-align:center;">228</div>
<div class="t f" style="left:404.795px;top:439.368px;width:96px;height:27px;line-height:27px;font-size:20.5px;color:#333;text-align:center;">239</div>
<div class="t f" style="left:502.925px;top:439.368px;width:96px;height:27px;line-height:27px;font-size:20.5px;color:#333;text-align:center;">228</div>
<div class="t f" style="left:601.055px;top:439.368px;width:96px;height:27px;line-height:27px;font-size:20.5px;color:#333;text-align:center;">229</div>
<div class="t f" style="left:699.185px;top:439.368px;width:96px;height:27px;line-height:27px;font-size:20.5px;color:#333;text-align:center;">249</div>
<div class="t f" style="left:797.315px;top:439.368px;width:96px;height:27px;line-height:27px;font-size:20.5px;color:#333;text-align:center;">232</div>
<div class="t f" style="left:895.445px;top:439.368px;width:96px;height:27px;line-height:27px;font-size:20.5px;color:#333;text-align:center;">194</div>
<div class="t f" style="left:993.575px;top:439.368px;width:96px;height:27px;line-height:27px;font-size:20.5px;color:#333;text-align:center;">227</div>
<div class="t f" style="left:1091.7px;top:439.368px;width:96px;height:27px;line-height:27px;font-size:20.5px;color:#333;text-align:center;">230</div>
<div class="t f" style="left:1189.84px;top:439.368px;width:96px;height:27px;line-height:27px;font-size:20.5px;color:#333;text-align:center;">229</div>
<div class="t f" style="left:1287.96px;top:439.368px;width:96px;height:27px;line-height:27px;font-size:20.5px;color:#333;text-align:center;">238</div>
<div class="t f" style="left:1386.09px;top:439.368px;width:96px;height:27px;line-height:27px;font-size:20.5px;color:#333;text-align:center;">198</div>
<div class="t f" style="left:1331.58px;top:439.368px;width:400px;height:27px;line-height:27px;font-size:20.5px;color:#333;text-align:center;letter-spacing:.5px;">2, 721</div>
<div class="t f" style="left:54.5px;top:470.373px;width:250px;height:27px;line-height:27px;font-size:20.5px;color:#111;text-align:left;font-weight:bold;letter-spacing:.03em;">燃料动能</div>
<div class="t f" style="left:306.665px;top:468.873px;width:96px;height:27px;line-height:27px;font-size:21px;color:#111;text-align:center;font-weight:bold;letter-spacing:.6px;">183</div>
<div class="t f" style="left:404.795px;top:468.873px;width:96px;height:27px;line-height:27px;font-size:21px;color:#111;text-align:center;font-weight:bold;letter-spacing:.6px;">178</div>
<div class="t f" style="left:502.925px;top:468.873px;width:96px;height:27px;line-height:27px;font-size:21px;color:#111;text-align:center;font-weight:bold;letter-spacing:.6px;">186</div>
<div class="t f" style="left:601.055px;top:468.873px;width:96px;height:27px;line-height:27px;font-size:21px;color:#111;text-align:center;font-weight:bold;letter-spacing:.6px;">180</div>
<div class="t f" style="left:699.185px;top:468.873px;width:96px;height:27px;line-height:27px;font-size:21px;color:#111;text-align:center;font-weight:bold;letter-spacing:.6px;">175</div>
<div class="t f" style="left:797.315px;top:468.873px;width:96px;height:27px;line-height:27px;font-size:21px;color:#111;text-align:center;font-weight:bold;letter-spacing:.6px;">184</div>
<div class="t f" style="left:895.445px;top:468.873px;width:96px;height:27px;line-height:27px;font-size:21px;color:#111;text-align:center;font-weight:bold;letter-spacing:.6px;">179</div>
<div class="t f" style="left:993.575px;top:468.873px;width:96px;height:27px;line-height:27px;font-size:21px;color:#111;text-align:center;font-weight:bold;letter-spacing:.6px;">182</div>
<div class="t f" style="left:1091.7px;top:468.873px;width:96px;height:27px;line-height:27px;font-size:21px;color:#111;text-align:center;font-weight:bold;letter-spacing:.6px;">181</div>
<div class="t f" style="left:1189.84px;top:468.873px;width:96px;height:27px;line-height:27px;font-size:21px;color:#111;text-align:center;font-weight:bold;letter-spacing:.6px;">185</div>
<div class="t f" style="left:1287.96px;top:468.873px;width:96px;height:27px;line-height:27px;font-size:21px;color:#111;text-align:center;font-weight:bold;letter-spacing:.6px;">180</div>
<div class="t f" style="left:1386.09px;top:468.873px;width:96px;height:27px;line-height:27px;font-size:21px;color:#111;text-align:center;font-weight:bold;letter-spacing:.6px;">182</div>
<div class="t f" style="left:1331.08px;top:468.873px;width:400px;height:27px;line-height:27px;font-size:21px;color:#111;text-align:center;font-weight:bold;letter-spacing:.8px;">2, 175</div>
<div class="t f" style="left:73.5px;top:499.178px;width:230px;height:25px;line-height:25px;font-size:19.6px;color:#555;text-align:left;">水</div>
<div class="t f" style="left:306.665px;top:498.377px;width:96px;height:27px;line-height:27px;font-size:20.5px;color:#333;text-align:center;">24</div>
<div class="t f" style="left:404.795px;top:498.377px;width:96px;height:27px;line-height:27px;font-size:20.5px;color:#333;text-align:center;">31</div>
<div class="t f" style="left:502.925px;top:498.377px;width:96px;height:27px;line-height:27px;font-size:20.5px;color:#333;text-align:center;">28</div>
<div class="t f" style="left:601.055px;top:498.377px;width:96px;height:27px;line-height:27px;font-size:20.5px;color:#333;text-align:center;">30</div>
<div class="t f" style="left:699.185px;top:498.377px;width:96px;height:27px;line-height:27px;font-size:20.5px;color:#333;text-align:center;">29</div>
<div class="t f" style="left:797.315px;top:498.377px;width:96px;height:27px;line-height:27px;font-size:20.5px;color:#333;text-align:center;">32</div>
<div class="t f" style="left:895.445px;top:498.377px;width:96px;height:27px;line-height:27px;font-size:20.5px;color:#333;text-align:center;">27</div>
<div class="t f" style="left:993.575px;top:498.377px;width:96px;height:27px;line-height:27px;font-size:20.5px;color:#333;text-align:center;">31</div>
<div class="t f" style="left:1091.7px;top:498.377px;width:96px;height:27px;line-height:27px;font-size:20.5px;color:#333;text-align:center;">30</div>
<div class="t f" style="left:1189.84px;top:498.377px;width:96px;height:27px;line-height:27px;font-size:20.5px;color:#333;text-align:center;">33</div>
<div class="t f" style="left:1287.96px;top:498.377px;width:96px;height:27px;line-height:27px;font-size:20.5px;color:#333;text-align:center;">29</div>
<div class="t f" style="left:1386.09px;top:498.377px;width:96px;height:27px;line-height:27px;font-size:20.5px;color:#333;text-align:center;">30</div>
<div class="t f" style="left:1331.58px;top:498.377px;width:400px;height:27px;line-height:27px;font-size:20.5px;color:#333;text-align:center;letter-spacing:.5px;">354</div>
<div class="t f" style="left:73.5px;top:528.683px;width:230px;height:25px;line-height:25px;font-size:19.6px;color:#555;text-align:left;">电</div>
<div class="t f" style="left:306.665px;top:527.883px;width:96px;height:27px;line-height:27px;font-size:20.5px;color:#333;text-align:center;">148</div>
<div class="t f" style="left:404.795px;top:527.883px;width:96px;height:27px;line-height:27px;font-size:20.5px;color:#333;text-align:center;">136</div>
<div class="t f" style="left:502.925px;top:527.883px;width:96px;height:27px;line-height:27px;font-size:20.5px;color:#333;text-align:center;">146</div>
<div class="t f" style="left:601.055px;top:527.883px;width:96px;height:27px;line-height:27px;font-size:20.5px;color:#333;text-align:center;">138</div>
<div class="t f" style="left:699.185px;top:527.883px;width:96px;height:27px;line-height:27px;font-size:20.5px;color:#333;text-align:center;">135</div>
<div class="t f" style="left:797.315px;top:527.883px;width:96px;height:27px;line-height:27px;font-size:20.5px;color:#333;text-align:center;">140</div>
<div class="t f" style="left:895.445px;top:527.883px;width:96px;height:27px;line-height:27px;font-size:20.5px;color:#333;text-align:center;">141</div>
<div class="t f" style="left:993.575px;top:527.883px;width:96px;height:27px;line-height:27px;font-size:20.5px;color:#333;text-align:center;">139</div>
<div class="t f" style="left:1091.7px;top:527.883px;width:96px;height:27px;line-height:27px;font-size:20.5px;color:#333;text-align:center;">140</div>
<div class="t f" style="left:1189.84px;top:527.883px;width:96px;height:27px;line-height:27px;font-size:20.5px;color:#333;text-align:center;">141</div>
<div class="t f" style="left:1287.96px;top:527.883px;width:96px;height:27px;line-height:27px;font-size:20.5px;color:#333;text-align:center;">140</div>
<div class="t f" style="left:1386.09px;top:527.883px;width:96px;height:27px;line-height:27px;font-size:20.5px;color:#333;text-align:center;">125</div>
<div class="t f" style="left:1331.58px;top:527.883px;width:400px;height:27px;line-height:27px;font-size:20.5px;color:#333;text-align:center;letter-spacing:.5px;">1, 669</div>
<div class="t f" style="left:73.5px;top:558.187px;width:230px;height:25px;line-height:25px;font-size:19.6px;color:#555;text-align:left;">汽</div>
<div class="t f" style="left:306.665px;top:557.387px;width:96px;height:27px;line-height:27px;font-size:20.5px;color:#333;text-align:center;">11</div>
<div class="t f" style="left:404.795px;top:557.387px;width:96px;height:27px;line-height:27px;font-size:20.5px;color:#333;text-align:center;">11</div>
<div class="t f" style="left:502.925px;top:557.387px;width:96px;height:27px;line-height:27px;font-size:20.5px;color:#333;text-align:center;">12</div>
<div class="t f" style="left:601.055px;top:557.387px;width:96px;height:27px;line-height:27px;font-size:20.5px;color:#333;text-align:center;">12</div>
<div class="t f" style="left:699.185px;top:557.387px;width:96px;height:27px;line-height:27px;font-size:20.5px;color:#333;text-align:center;">11</div>
<div class="t f" style="left:797.315px;top:557.387px;width:96px;height:27px;line-height:27px;font-size:20.5px;color:#333;text-align:center;">12</div>
<div class="t f" style="left:895.445px;top:557.387px;width:96px;height:27px;line-height:27px;font-size:20.5px;color:#333;text-align:center;">11</div>
<div class="t f" style="left:993.575px;top:557.387px;width:96px;height:27px;line-height:27px;font-size:20.5px;color:#333;text-align:center;">12</div>
<div class="t f" style="left:1091.7px;top:557.387px;width:96px;height:27px;line-height:27px;font-size:20.5px;color:#333;text-align:center;">11</div>
<div class="t f" style="left:1189.84px;top:557.387px;width:96px;height:27px;line-height:27px;font-size:20.5px;color:#333;text-align:center;">11</div>
<div class="t f" style="left:1287.96px;top:557.387px;width:96px;height:27px;line-height:27px;font-size:20.5px;color:#333;text-align:center;">11</div>
<div class="t f" style="left:1386.09px;top:557.387px;width:96px;height:27px;line-height:27px;font-size:20.5px;color:#333;text-align:center;">27</div>
<div class="t f" style="left:1331.58px;top:557.387px;width:400px;height:27px;line-height:27px;font-size:20.5px;color:#333;text-align:center;letter-spacing:.5px;">152</div>
<div class="t f" style="left:54.5px;top:588.393px;width:250px;height:27px;line-height:27px;font-size:20.5px;color:#111;text-align:left;font-weight:bold;letter-spacing:.03em;">工装模具</div>
<div class="t f" style="left:306.665px;top:586.893px;width:96px;height:27px;line-height:27px;font-size:21px;color:#111;text-align:center;font-weight:bold;letter-spacing:.6px;">722</div>
<div class="t f" style="left:404.795px;top:586.893px;width:96px;height:27px;line-height:27px;font-size:21px;color:#111;text-align:center;font-weight:bold;letter-spacing:.6px;">681</div>
<div class="t f" style="left:502.925px;top:586.893px;width:96px;height:27px;line-height:27px;font-size:21px;color:#111;text-align:center;font-weight:bold;letter-spacing:.6px;">690</div>
<div class="t f" style="left:601.055px;top:586.893px;width:96px;height:27px;line-height:27px;font-size:21px;color:#111;text-align:center;font-weight:bold;letter-spacing:.6px;">672</div>
<div class="t f" style="left:699.185px;top:586.893px;width:96px;height:27px;line-height:27px;font-size:21px;color:#111;text-align:center;font-weight:bold;letter-spacing:.6px;">688</div>
<div class="t f" style="left:797.315px;top:586.893px;width:96px;height:27px;line-height:27px;font-size:21px;color:#111;text-align:center;font-weight:bold;letter-spacing:.6px;">694</div>
<div class="t f" style="left:895.445px;top:586.893px;width:96px;height:27px;line-height:27px;font-size:21px;color:#111;text-align:center;font-weight:bold;letter-spacing:.6px;">671</div>
<div class="t f" style="left:993.575px;top:586.893px;width:96px;height:27px;line-height:27px;font-size:21px;color:#111;text-align:center;font-weight:bold;letter-spacing:.6px;">683</div>
<div class="t f" style="left:1091.7px;top:586.893px;width:96px;height:27px;line-height:27px;font-size:21px;color:#111;text-align:center;font-weight:bold;letter-spacing:.6px;">690</div>
<div class="t f" style="left:1189.84px;top:586.893px;width:96px;height:27px;line-height:27px;font-size:21px;color:#111;text-align:center;font-weight:bold;letter-spacing:.6px;">668</div>
<div class="t f" style="left:1287.96px;top:586.893px;width:96px;height:27px;line-height:27px;font-size:21px;color:#111;text-align:center;font-weight:bold;letter-spacing:.6px;">679</div>
<div class="t f" style="left:1386.09px;top:586.893px;width:96px;height:27px;line-height:27px;font-size:21px;color:#111;text-align:center;font-weight:bold;letter-spacing:.6px;">677</div>
<div class="t f" style="left:1331.08px;top:586.893px;width:400px;height:27px;line-height:27px;font-size:21px;color:#111;text-align:center;font-weight:bold;letter-spacing:.8px;">8, 215</div>
<div class="t f" style="left:73.5px;top:617.197px;width:230px;height:25px;line-height:25px;font-size:19.6px;color:#555;text-align:left;">工装费用</div>
<div class="t f" style="left:306.665px;top:616.398px;width:96px;height:27px;line-height:27px;font-size:20.5px;color:#333;text-align:center;">230</div>
<div class="t f" style="left:404.795px;top:616.398px;width:96px;height:27px;line-height:27px;font-size:20.5px;color:#333;text-align:center;">228</div>
<div class="t f" style="left:502.925px;top:616.398px;width:96px;height:27px;line-height:27px;font-size:20.5px;color:#333;text-align:center;">231</div>
<div class="t f" style="left:601.055px;top:616.398px;width:96px;height:27px;line-height:27px;font-size:20.5px;color:#333;text-align:center;">224</div>
<div class="t f" style="left:699.185px;top:616.398px;width:96px;height:27px;line-height:27px;font-size:20.5px;color:#333;text-align:center;">229</div>
<div class="t f" style="left:797.315px;top:616.398px;width:96px;height:27px;line-height:27px;font-size:20.5px;color:#333;text-align:center;">232</div>
<div class="t f" style="left:895.445px;top:616.398px;width:96px;height:27px;line-height:27px;font-size:20.5px;color:#333;text-align:center;">223</div>
<div class="t f" style="left:993.575px;top:616.398px;width:96px;height:27px;line-height:27px;font-size:20.5px;color:#333;text-align:center;">228</div>
<div class="t f" style="left:1091.7px;top:616.398px;width:96px;height:27px;line-height:27px;font-size:20.5px;color:#333;text-align:center;">231</div>
<div class="t f" style="left:1189.84px;top:616.398px;width:96px;height:27px;line-height:27px;font-size:20.5px;color:#333;text-align:center;">222</div>
<div class="t f" style="left:1287.96px;top:616.398px;width:96px;height:27px;line-height:27px;font-size:20.5px;color:#333;text-align:center;">233</div>
<div class="t f" style="left:1386.09px;top:616.398px;width:96px;height:27px;line-height:27px;font-size:20.5px;color:#333;text-align:center;">232</div>
<div class="t f" style="left:1331.58px;top:616.398px;width:400px;height:27px;line-height:27px;font-size:20.5px;color:#333;text-align:center;letter-spacing:.5px;">2, 743</div>
<div class="t f" style="left:73.5px;top:646.702px;width:230px;height:25px;line-height:25px;font-size:19.6px;color:#555;text-align:left;">模具费用</div>
<div class="t f" style="left:306.665px;top:645.903px;width:96px;height:27px;line-height:27px;font-size:20.5px;color:#333;text-align:center;">492</div>
<div class="t f" style="left:404.795px;top:645.903px;width:96px;height:27px;line-height:27px;font-size:20.5px;color:#333;text-align:center;">453</div>
<div class="t f" style="left:502.925px;top:645.903px;width:96px;height:27px;line-height:27px;font-size:20.5px;color:#333;text-align:center;">459</div>
<div class="t f" style="left:601.055px;top:645.903px;width:96px;height:27px;line-height:27px;font-size:20.5px;color:#333;text-align:center;">448</div>
<div class="t f" style="left:699.185px;top:645.903px;width:96px;height:27px;line-height:27px;font-size:20.5px;color:#333;text-align:center;">459</div>
<div class="t f" style="left:797.315px;top:645.903px;width:96px;height:27px;line-height:27px;font-size:20.5px;color:#333;text-align:center;">462</div>
<div class="t f" style="left:895.445px;top:645.903px;width:96px;height:27px;line-height:27px;font-size:20.5px;color:#333;text-align:center;">448</div>
<div class="t f" style="left:993.575px;top:645.903px;width:96px;height:27px;line-height:27px;font-size:20.5px;color:#333;text-align:center;">455</div>
<div class="t f" style="left:1091.7px;top:645.903px;width:96px;height:27px;line-height:27px;font-size:20.5px;color:#333;text-align:center;">459</div>
<div class="t f" style="left:1189.84px;top:645.903px;width:96px;height:27px;line-height:27px;font-size:20.5px;color:#333;text-align:center;">446</div>
<div class="t f" style="left:1287.96px;top:645.903px;width:96px;height:27px;line-height:27px;font-size:20.5px;color:#333;text-align:center;">446</div>
<div class="t f" style="left:1386.09px;top:645.903px;width:96px;height:27px;line-height:27px;font-size:20.5px;color:#333;text-align:center;">445</div>
<div class="t f" style="left:1331.58px;top:645.903px;width:400px;height:27px;line-height:27px;font-size:20.5px;color:#333;text-align:center;letter-spacing:.5px;">5, 472</div>
<div class="t f" style="left:54.5px;top:676.908px;width:250px;height:27px;line-height:27px;font-size:20.5px;color:#111;text-align:left;font-weight:bold;letter-spacing:.03em;">机物料消耗</div>
<div class="t f" style="left:306.665px;top:675.408px;width:96px;height:27px;line-height:27px;font-size:21px;color:#111;text-align:center;font-weight:bold;letter-spacing:.6px;">24</div>
<div class="t f" style="left:404.795px;top:675.408px;width:96px;height:27px;line-height:27px;font-size:21px;color:#111;text-align:center;font-weight:bold;letter-spacing:.6px;">31</div>
<div class="t f" style="left:502.925px;top:675.408px;width:96px;height:27px;line-height:27px;font-size:21px;color:#111;text-align:center;font-weight:bold;letter-spacing:.6px;">29</div>
<div class="t f" style="left:601.055px;top:675.408px;width:96px;height:27px;line-height:27px;font-size:21px;color:#111;text-align:center;font-weight:bold;letter-spacing:.6px;">30</div>
<div class="t f" style="left:699.185px;top:675.408px;width:96px;height:27px;line-height:27px;font-size:21px;color:#111;text-align:center;font-weight:bold;letter-spacing:.6px;">28</div>
<div class="t f" style="left:797.315px;top:675.408px;width:96px;height:27px;line-height:27px;font-size:21px;color:#111;text-align:center;font-weight:bold;letter-spacing:.6px;">32</div>
<div class="t f" style="left:895.445px;top:675.408px;width:96px;height:27px;line-height:27px;font-size:21px;color:#111;text-align:center;font-weight:bold;letter-spacing:.6px;">29</div>
<div class="t f" style="left:993.575px;top:675.408px;width:96px;height:27px;line-height:27px;font-size:21px;color:#111;text-align:center;font-weight:bold;letter-spacing:.6px;">30</div>
<div class="t f" style="left:1091.7px;top:675.408px;width:96px;height:27px;line-height:27px;font-size:21px;color:#111;text-align:center;font-weight:bold;letter-spacing:.6px;">31</div>
<div class="t f" style="left:1189.84px;top:675.408px;width:96px;height:27px;line-height:27px;font-size:21px;color:#111;text-align:center;font-weight:bold;letter-spacing:.6px;">30</div>
<div class="t f" style="left:1287.96px;top:675.408px;width:96px;height:27px;line-height:27px;font-size:21px;color:#111;text-align:center;font-weight:bold;letter-spacing:.6px;">32</div>
<div class="t f" style="left:1386.09px;top:675.408px;width:96px;height:27px;line-height:27px;font-size:21px;color:#111;text-align:center;font-weight:bold;letter-spacing:.6px;">30</div>
<div class="t f" style="left:1331.08px;top:675.408px;width:400px;height:27px;line-height:27px;font-size:21px;color:#111;text-align:center;font-weight:bold;letter-spacing:.8px;">356</div>
<div class="t f" style="left:54.5px;top:706.413px;width:250px;height:27px;line-height:27px;font-size:20.5px;color:#111;text-align:left;font-weight:bold;letter-spacing:.03em;">折旧</div>
<div class="t f" style="left:306.665px;top:704.913px;width:96px;height:27px;line-height:27px;font-size:21px;color:#111;text-align:center;font-weight:bold;letter-spacing:.6px;">218</div>
<div class="t f" style="left:404.795px;top:704.913px;width:96px;height:27px;line-height:27px;font-size:21px;color:#111;text-align:center;font-weight:bold;letter-spacing:.6px;">219</div>
<div class="t f" style="left:502.925px;top:704.913px;width:96px;height:27px;line-height:27px;font-size:21px;color:#111;text-align:center;font-weight:bold;letter-spacing:.6px;">221</div>
<div class="t f" style="left:601.055px;top:704.913px;width:96px;height:27px;line-height:27px;font-size:21px;color:#111;text-align:center;font-weight:bold;letter-spacing:.6px;">219</div>
<div class="t f" style="left:699.185px;top:704.913px;width:96px;height:27px;line-height:27px;font-size:21px;color:#111;text-align:center;font-weight:bold;letter-spacing:.6px;">227</div>
<div class="t f" style="left:797.315px;top:704.913px;width:96px;height:27px;line-height:27px;font-size:21px;color:#111;text-align:center;font-weight:bold;letter-spacing:.6px;">214</div>
<div class="t f" style="left:895.445px;top:704.913px;width:96px;height:27px;line-height:27px;font-size:21px;color:#111;text-align:center;font-weight:bold;letter-spacing:.6px;">223</div>
<div class="t f" style="left:993.575px;top:704.913px;width:96px;height:27px;line-height:27px;font-size:21px;color:#111;text-align:center;font-weight:bold;letter-spacing:.6px;">207</div>
<div class="t f" style="left:1091.7px;top:704.913px;width:96px;height:27px;line-height:27px;font-size:21px;color:#111;text-align:center;font-weight:bold;letter-spacing:.6px;">230</div>
<div class="t f" style="left:1189.84px;top:704.913px;width:96px;height:27px;line-height:27px;font-size:21px;color:#111;text-align:center;font-weight:bold;letter-spacing:.6px;">221</div>
<div class="t f" style="left:1287.96px;top:704.913px;width:96px;height:27px;line-height:27px;font-size:21px;color:#111;text-align:center;font-weight:bold;letter-spacing:.6px;">228</div>
<div class="t f" style="left:1386.09px;top:704.913px;width:96px;height:27px;line-height:27px;font-size:21px;color:#111;text-align:center;font-weight:bold;letter-spacing:.6px;">221</div>
<div class="t f" style="left:1331.08px;top:704.913px;width:400px;height:27px;line-height:27px;font-size:21px;color:#111;text-align:center;font-weight:bold;letter-spacing:.8px;">2, 648</div>
<div class="t f" style="left:54.5px;top:735.918px;width:250px;height:27px;line-height:27px;font-size:20.5px;color:#111;text-align:left;font-weight:bold;letter-spacing:.03em;">维修费</div>
<div class="t f" style="left:306.665px;top:734.418px;width:96px;height:27px;line-height:27px;font-size:21px;color:#111;text-align:center;font-weight:bold;letter-spacing:.6px;">78</div>
<div class="t f" style="left:404.795px;top:734.418px;width:96px;height:27px;line-height:27px;font-size:21px;color:#111;text-align:center;font-weight:bold;letter-spacing:.6px;">76</div>
<div class="t f" style="left:502.925px;top:734.418px;width:96px;height:27px;line-height:27px;font-size:21px;color:#111;text-align:center;font-weight:bold;letter-spacing:.6px;">75</div>
<div class="t f" style="left:601.055px;top:734.418px;width:96px;height:27px;line-height:27px;font-size:21px;color:#111;text-align:center;font-weight:bold;letter-spacing:.6px;">73</div>
<div class="t f" style="left:699.185px;top:734.418px;width:96px;height:27px;line-height:27px;font-size:21px;color:#111;text-align:center;font-weight:bold;letter-spacing:.6px;">78</div>
<div class="t f" style="left:797.315px;top:734.418px;width:96px;height:27px;line-height:27px;font-size:21px;color:#111;text-align:center;font-weight:bold;letter-spacing:.6px;">77</div>
<div class="t f" style="left:895.445px;top:734.418px;width:96px;height:27px;line-height:27px;font-size:21px;color:#111;text-align:center;font-weight:bold;letter-spacing:.6px;">74</div>
<div class="t f" style="left:993.575px;top:734.418px;width:96px;height:27px;line-height:27px;font-size:21px;color:#111;text-align:center;font-weight:bold;letter-spacing:.6px;">70</div>
<div class="t f" style="left:1091.7px;top:734.418px;width:96px;height:27px;line-height:27px;font-size:21px;color:#111;text-align:center;font-weight:bold;letter-spacing:.6px;">62</div>
<div class="t f" style="left:1189.84px;top:734.418px;width:96px;height:27px;line-height:27px;font-size:21px;color:#111;text-align:center;font-weight:bold;letter-spacing:.6px;">63</div>
<div class="t f" style="left:1287.96px;top:734.418px;width:96px;height:27px;line-height:27px;font-size:21px;color:#111;text-align:center;font-weight:bold;letter-spacing:.6px;">72</div>
<div class="t f" style="left:1386.09px;top:734.418px;width:96px;height:27px;line-height:27px;font-size:21px;color:#111;text-align:center;font-weight:bold;letter-spacing:.6px;">79</div>
<div class="t f" style="left:1331.08px;top:734.418px;width:400px;height:27px;line-height:27px;font-size:21px;color:#111;text-align:center;font-weight:bold;letter-spacing:.8px;">877</div>
<div class="t f" style="left:54.5px;top:765.423px;width:250px;height:27px;line-height:27px;font-size:20.5px;color:#111;text-align:left;font-weight:bold;letter-spacing:.03em;">办公费</div>
<div class="t f" style="left:306.665px;top:763.923px;width:96px;height:27px;line-height:27px;font-size:21px;color:#111;text-align:center;font-weight:bold;letter-spacing:.6px;">18</div>
<div class="t f" style="left:404.795px;top:763.923px;width:96px;height:27px;line-height:27px;font-size:21px;color:#111;text-align:center;font-weight:bold;letter-spacing:.6px;">19</div>
<div class="t f" style="left:502.925px;top:763.923px;width:96px;height:27px;line-height:27px;font-size:21px;color:#111;text-align:center;font-weight:bold;letter-spacing:.6px;">18</div>
<div class="t f" style="left:601.055px;top:763.923px;width:96px;height:27px;line-height:27px;font-size:21px;color:#111;text-align:center;font-weight:bold;letter-spacing:.6px;">16</div>
<div class="t f" style="left:699.185px;top:763.923px;width:96px;height:27px;line-height:27px;font-size:21px;color:#111;text-align:center;font-weight:bold;letter-spacing:.6px;">17</div>
<div class="t f" style="left:797.315px;top:763.923px;width:96px;height:27px;line-height:27px;font-size:21px;color:#111;text-align:center;font-weight:bold;letter-spacing:.6px;">10</div>
<div class="t f" style="left:895.445px;top:763.923px;width:96px;height:27px;line-height:27px;font-size:21px;color:#111;text-align:center;font-weight:bold;letter-spacing:.6px;">17</div>
<div class="t f" style="left:993.575px;top:763.923px;width:96px;height:27px;line-height:27px;font-size:21px;color:#111;text-align:center;font-weight:bold;letter-spacing:.6px;">17</div>
<div class="t f" style="left:1091.7px;top:763.923px;width:96px;height:27px;line-height:27px;font-size:21px;color:#111;text-align:center;font-weight:bold;letter-spacing:.6px;">14</div>
<div class="t f" style="left:1189.84px;top:763.923px;width:96px;height:27px;line-height:27px;font-size:21px;color:#111;text-align:center;font-weight:bold;letter-spacing:.6px;">11</div>
<div class="t f" style="left:1287.96px;top:763.923px;width:96px;height:27px;line-height:27px;font-size:21px;color:#111;text-align:center;font-weight:bold;letter-spacing:.6px;">10</div>
<div class="t f" style="left:1386.09px;top:763.923px;width:96px;height:27px;line-height:27px;font-size:21px;color:#111;text-align:center;font-weight:bold;letter-spacing:.6px;">15</div>
<div class="t f" style="left:1331.08px;top:763.923px;width:400px;height:27px;line-height:27px;font-size:21px;color:#111;text-align:center;font-weight:bold;letter-spacing:.8px;">182</div>
<div class="t f" style="left:54.5px;top:794.928px;width:250px;height:27px;line-height:27px;font-size:20.5px;color:#111;text-align:left;font-weight:bold;letter-spacing:.03em;">差旅费</div>
<div class="t f" style="left:306.665px;top:793.428px;width:96px;height:27px;line-height:27px;font-size:21px;color:#111;text-align:center;font-weight:bold;letter-spacing:.6px;">20</div>
<div class="t f" style="left:404.795px;top:793.428px;width:96px;height:27px;line-height:27px;font-size:21px;color:#111;text-align:center;font-weight:bold;letter-spacing:.6px;">24</div>
<div class="t f" style="left:502.925px;top:793.428px;width:96px;height:27px;line-height:27px;font-size:21px;color:#111;text-align:center;font-weight:bold;letter-spacing:.6px;">24</div>
<div class="t f" style="left:601.055px;top:793.428px;width:96px;height:27px;line-height:27px;font-size:21px;color:#111;text-align:center;font-weight:bold;letter-spacing:.6px;">20</div>
<div class="t f" style="left:699.185px;top:793.428px;width:96px;height:27px;line-height:27px;font-size:21px;color:#111;text-align:center;font-weight:bold;letter-spacing:.6px;">31</div>
<div class="t f" style="left:797.315px;top:793.428px;width:96px;height:27px;line-height:27px;font-size:21px;color:#111;text-align:center;font-weight:bold;letter-spacing:.6px;">21</div>
<div class="t f" style="left:895.445px;top:793.428px;width:96px;height:27px;line-height:27px;font-size:21px;color:#111;text-align:center;font-weight:bold;letter-spacing:.6px;">24</div>
<div class="t f" style="left:993.575px;top:793.428px;width:96px;height:27px;line-height:27px;font-size:21px;color:#111;text-align:center;font-weight:bold;letter-spacing:.6px;">24</div>
<div class="t f" style="left:1091.7px;top:793.428px;width:96px;height:27px;line-height:27px;font-size:21px;color:#111;text-align:center;font-weight:bold;letter-spacing:.6px;">37</div>
<div class="t f" style="left:1189.84px;top:793.428px;width:96px;height:27px;line-height:27px;font-size:21px;color:#111;text-align:center;font-weight:bold;letter-spacing:.6px;">38</div>
<div class="t f" style="left:1287.96px;top:793.428px;width:96px;height:27px;line-height:27px;font-size:21px;color:#111;text-align:center;font-weight:bold;letter-spacing:.6px;">22</div>
<div class="t f" style="left:1386.09px;top:793.428px;width:96px;height:27px;line-height:27px;font-size:21px;color:#111;text-align:center;font-weight:bold;letter-spacing:.6px;">35</div>
<div class="t f" style="left:1331.08px;top:793.428px;width:400px;height:27px;line-height:27px;font-size:21px;color:#111;text-align:center;font-weight:bold;letter-spacing:.8px;">320</div>
<div class="t f" style="left:54.5px;top:824.433px;width:250px;height:27px;line-height:27px;font-size:20.5px;color:#111;text-align:left;font-weight:bold;letter-spacing:.03em;">通讯费</div>
<div class="t f" style="left:306.665px;top:822.933px;width:96px;height:27px;line-height:27px;font-size:21px;color:#111;text-align:center;font-weight:bold;letter-spacing:.6px;">13</div>
<div class="t f" style="left:404.795px;top:822.933px;width:96px;height:27px;line-height:27px;font-size:21px;color:#111;text-align:center;font-weight:bold;letter-spacing:.6px;">12</div>
<div class="t f" style="left:502.925px;top:822.933px;width:96px;height:27px;line-height:27px;font-size:21px;color:#111;text-align:center;font-weight:bold;letter-spacing:.6px;">13</div>
<div class="t f" style="left:601.055px;top:822.933px;width:96px;height:27px;line-height:27px;font-size:21px;color:#111;text-align:center;font-weight:bold;letter-spacing:.6px;">18</div>
<div class="t f" style="left:699.185px;top:822.933px;width:96px;height:27px;line-height:27px;font-size:21px;color:#111;text-align:center;font-weight:bold;letter-spacing:.6px;">13</div>
<div class="t f" style="left:797.315px;top:822.933px;width:96px;height:27px;line-height:27px;font-size:21px;color:#111;text-align:center;font-weight:bold;letter-spacing:.6px;">14</div>
<div class="t f" style="left:895.445px;top:822.933px;width:96px;height:27px;line-height:27px;font-size:21px;color:#111;text-align:center;font-weight:bold;letter-spacing:.6px;">15</div>
<div class="t f" style="left:993.575px;top:822.933px;width:96px;height:27px;line-height:27px;font-size:21px;color:#111;text-align:center;font-weight:bold;letter-spacing:.6px;">15</div>
<div class="t f" style="left:1091.7px;top:822.933px;width:96px;height:27px;line-height:27px;font-size:21px;color:#111;text-align:center;font-weight:bold;letter-spacing:.6px;">13</div>
<div class="t f" style="left:1189.84px;top:822.933px;width:96px;height:27px;line-height:27px;font-size:21px;color:#111;text-align:center;font-weight:bold;letter-spacing:.6px;">14</div>
<div class="t f" style="left:1287.96px;top:822.933px;width:96px;height:27px;line-height:27px;font-size:21px;color:#111;text-align:center;font-weight:bold;letter-spacing:.6px;">20</div>
<div class="t f" style="left:1386.09px;top:822.933px;width:96px;height:27px;line-height:27px;font-size:21px;color:#111;text-align:center;font-weight:bold;letter-spacing:.6px;">17</div>
<div class="t f" style="left:1331.08px;top:822.933px;width:400px;height:27px;line-height:27px;font-size:21px;color:#111;text-align:center;font-weight:bold;letter-spacing:.8px;">177</div>
<div class="t f" style="left:54.5px;top:853.938px;width:250px;height:27px;line-height:27px;font-size:20.5px;color:#111;text-align:left;font-weight:bold;letter-spacing:.03em;">内部培训费</div>
<div class="t f" style="left:306.665px;top:852.438px;width:96px;height:27px;line-height:27px;font-size:21px;color:#111;text-align:center;font-weight:bold;letter-spacing:.6px;">20</div>
<div class="t f" style="left:404.795px;top:852.438px;width:96px;height:27px;line-height:27px;font-size:21px;color:#111;text-align:center;font-weight:bold;letter-spacing:.6px;">17</div>
<div class="t f" style="left:502.925px;top:852.438px;width:96px;height:27px;line-height:27px;font-size:21px;color:#111;text-align:center;font-weight:bold;letter-spacing:.6px;">13</div>
<div class="t f" style="left:601.055px;top:852.438px;width:96px;height:27px;line-height:27px;font-size:21px;color:#111;text-align:center;font-weight:bold;letter-spacing:.6px;">19</div>
<div class="t f" style="left:699.185px;top:852.438px;width:96px;height:27px;line-height:27px;font-size:21px;color:#111;text-align:center;font-weight:bold;letter-spacing:.6px;">15</div>
<div class="t f" style="left:797.315px;top:852.438px;width:96px;height:27px;line-height:27px;font-size:21px;color:#111;text-align:center;font-weight:bold;letter-spacing:.6px;">20</div>
<div class="t f" style="left:895.445px;top:852.438px;width:96px;height:27px;line-height:27px;font-size:21px;color:#111;text-align:center;font-weight:bold;letter-spacing:.6px;">19</div>
<div class="t f" style="left:993.575px;top:852.438px;width:96px;height:27px;line-height:27px;font-size:21px;color:#111;text-align:center;font-weight:bold;letter-spacing:.6px;">15</div>
<div class="t f" style="left:1091.7px;top:852.438px;width:96px;height:27px;line-height:27px;font-size:21px;color:#111;text-align:center;font-weight:bold;letter-spacing:.6px;">19</div>
<div class="t f" style="left:1189.84px;top:852.438px;width:96px;height:27px;line-height:27px;font-size:21px;color:#111;text-align:center;font-weight:bold;letter-spacing:.6px;">13</div>
<div class="t f" style="left:1287.96px;top:852.438px;width:96px;height:27px;line-height:27px;font-size:21px;color:#111;text-align:center;font-weight:bold;letter-spacing:.6px;">18</div>
<div class="t f" style="left:1386.09px;top:852.438px;width:96px;height:27px;line-height:27px;font-size:21px;color:#111;text-align:center;font-weight:bold;letter-spacing:.6px;">18</div>
<div class="t f" style="left:1331.08px;top:852.438px;width:400px;height:27px;line-height:27px;font-size:21px;color:#111;text-align:center;font-weight:bold;letter-spacing:.8px;">206</div>
<div class="t f" style="left:54.5px;top:883.442px;width:250px;height:27px;line-height:27px;font-size:20.5px;color:#111;text-align:left;font-weight:bold;letter-spacing:.03em;">其他</div>
<div class="t f" style="left:306.665px;top:881.942px;width:96px;height:27px;line-height:27px;font-size:21px;color:#111;text-align:center;font-weight:bold;letter-spacing:.6px;">17</div>
<div class="t f" style="left:404.795px;top:881.942px;width:96px;height:27px;line-height:27px;font-size:21px;color:#111;text-align:center;font-weight:bold;letter-spacing:.6px;">20</div>
<div class="t f" style="left:502.925px;top:881.942px;width:96px;height:27px;line-height:27px;font-size:21px;color:#111;text-align:center;font-weight:bold;letter-spacing:.6px;">20</div>
<div class="t f" style="left:601.055px;top:881.942px;width:96px;height:27px;line-height:27px;font-size:21px;color:#111;text-align:center;font-weight:bold;letter-spacing:.6px;">14</div>
<div class="t f" style="left:699.185px;top:881.942px;width:96px;height:27px;line-height:27px;font-size:21px;color:#111;text-align:center;font-weight:bold;letter-spacing:.6px;">16</div>
<div class="t f" style="left:797.315px;top:881.942px;width:96px;height:27px;line-height:27px;font-size:21px;color:#111;text-align:center;font-weight:bold;letter-spacing:.6px;">16</div>
<div class="t f" style="left:895.445px;top:881.942px;width:96px;height:27px;line-height:27px;font-size:21px;color:#111;text-align:center;font-weight:bold;letter-spacing:.6px;">14</div>
<div class="t f" style="left:993.575px;top:881.942px;width:96px;height:27px;line-height:27px;font-size:21px;color:#111;text-align:center;font-weight:bold;letter-spacing:.6px;">16</div>
<div class="t f" style="left:1091.7px;top:881.942px;width:96px;height:27px;line-height:27px;font-size:21px;color:#111;text-align:center;font-weight:bold;letter-spacing:.6px;">13</div>
<div class="t f" style="left:1189.84px;top:881.942px;width:96px;height:27px;line-height:27px;font-size:21px;color:#111;text-align:center;font-weight:bold;letter-spacing:.6px;">18</div>
<div class="t f" style="left:1287.96px;top:881.942px;width:96px;height:27px;line-height:27px;font-size:21px;color:#111;text-align:center;font-weight:bold;letter-spacing:.6px;">14</div>
<div class="t f" style="left:1386.09px;top:881.942px;width:96px;height:27px;line-height:27px;font-size:21px;color:#111;text-align:center;font-weight:bold;letter-spacing:.6px;">16</div>
<div class="t f" style="left:1331.08px;top:881.942px;width:400px;height:27px;line-height:27px;font-size:21px;color:#111;text-align:center;font-weight:bold;letter-spacing:.8px;">194</div>
<div class="t f" style="left:-18.2px;top:911.848px;width:400px;height:25px;line-height:25px;font-size:19.6px;color:#555;text-align:center;">合计（千元）</div>
<div class="t f" style="left:306.665px;top:909.648px;width:96px;height:29px;line-height:29px;font-size:22px;color:#111;text-align:center;font-weight:bold;letter-spacing:.3px;">3,986</div>
<div class="t f" style="left:404.795px;top:909.648px;width:96px;height:29px;line-height:29px;font-size:22px;color:#111;text-align:center;font-weight:bold;letter-spacing:.3px;">4,112</div>
<div class="t f" style="left:502.925px;top:909.648px;width:96px;height:29px;line-height:29px;font-size:22px;color:#111;text-align:center;font-weight:bold;letter-spacing:.3px;">3,825</div>
<div class="t f" style="left:601.055px;top:909.648px;width:96px;height:29px;line-height:29px;font-size:22px;color:#111;text-align:center;font-weight:bold;letter-spacing:.3px;">3,835</div>
<div class="t f" style="left:699.185px;top:909.648px;width:96px;height:29px;line-height:29px;font-size:22px;color:#111;text-align:center;font-weight:bold;letter-spacing:.3px;">4,131</div>
<div class="t f" style="left:797.315px;top:909.648px;width:96px;height:29px;line-height:29px;font-size:22px;color:#111;text-align:center;font-weight:bold;letter-spacing:.3px;">3,832</div>
<div class="t f" style="left:895.445px;top:909.648px;width:96px;height:29px;line-height:29px;font-size:22px;color:#111;text-align:center;font-weight:bold;letter-spacing:.3px;">3,920</div>
<div class="t f" style="left:993.575px;top:909.648px;width:96px;height:29px;line-height:29px;font-size:22px;color:#111;text-align:center;font-weight:bold;letter-spacing:.3px;">4,064</div>
<div class="t f" style="left:1091.7px;top:909.648px;width:96px;height:29px;line-height:29px;font-size:22px;color:#111;text-align:center;font-weight:bold;letter-spacing:.3px;">3,792</div>
<div class="t f" style="left:1189.84px;top:909.648px;width:96px;height:29px;line-height:29px;font-size:22px;color:#111;text-align:center;font-weight:bold;letter-spacing:.3px;">3,862</div>
<div class="t f" style="left:1287.96px;top:909.648px;width:96px;height:29px;line-height:29px;font-size:22px;color:#111;text-align:center;font-weight:bold;letter-spacing:.3px;">3,968</div>
<div class="t f" style="left:1386.09px;top:909.648px;width:96px;height:29px;line-height:29px;font-size:22px;color:#111;text-align:center;font-weight:bold;letter-spacing:.3px;">3,907</div>
<div class="t f" style="left:1336.08px;top:909.648px;width:400px;height:29px;line-height:29px;font-size:22px;color:#111;text-align:center;font-weight:bold;letter-spacing:.3px;">47,234</div>
<div style="left:657px;top:399px;width:820px;height:316px;background:#f0f0f0;"></div>
<div style="left:657px;top:399px;width:820px;height:33px;background:#fff;"></div>
<svg style="left:656px;top:399px;" width="3" height="316" viewBox="0 0 3 316"><path d="M1.500 1V316" stroke="#444" stroke-width="1.500" stroke-dasharray="4 2.500" fill="none"/></svg>
<div style="left:656.5px;top:713px;width:6px;height:2.5px;background:#222;"></div>
<div class="t" style="left:668.5px;top:402.3px;width:80px;height:23px;line-height:23px;font-size:17.8px;color:#9a9a9a;text-align:left;">排序</div>
<div class="t" style="left:1386.6px;top:403px;width:20px;height:18px;line-height:18px;font-size:14px;color:#a5a5a5;text-align:center;">?</div>
<svg style="left:1444px;top:405.5px;" width="14" height="14" viewBox="0 0 14 14"><path d="M1 1l12 12M13 1L1 13" stroke="#ababab" stroke-width="1.200" fill="none"/></svg>
<div style="left:667px;top:444.7px;width:145.7px;height:32.3px;background:#e1e1e1;border:1px solid #adadad;"></div>
<svg style="left:676px;top:448px;" width="25" height="27" viewBox="0 0 25 27"><path d="M1 5.500h8M5 1.500v8" stroke="#2f9a62" stroke-width="1.800" fill="none"/><text x="12" y="15" font-family="Liberation Sans, sans-serif" font-size="10.500" font-weight="bold" fill="#3a78c6" text-anchor="middle">A</text><text x="12" y="25" font-family="Liberation Sans, sans-serif" font-size="10.500" font-weight="bold" fill="#a45cc4" text-anchor="middle">Z</text><path d="M20.500 8v16.500M17.500 21l3 3.800 3-3.800" stroke="#555" stroke-width="1.300" fill="none"/></svg>
<div class="t h" style="left:705px;top:449.8px;width:110px;height:23px;line-height:23px;font-size:18px;color:#1f1f1f;text-align:left;">添加条件(<u>A</u>)</div>
<div style="left:817px;top:444.7px;width:145.7px;height:32.3px;background:#e1e1e1;border:1px solid #adadad;"></div>
<svg style="left:827.5px;top:451px;" width="23" height="21" viewBox="0 0 23 21"><path d="M1.500 1.500l20 18M21.500 1.500l-20 18" stroke="#4a4a4a" stroke-width="3" fill="none"/></svg>
<div class="t h" style="left:854.6px;top:449.8px;width:110px;height:23px;line-height:23px;font-size:18px;color:#1f1f1f;text-align:left;">删除条件(<u>D</u>)</div>
<div style="left:967px;top:444.7px;width:143.7px;height:32.3px;background:#e1e1e1;border:1px solid #adadad;"></div>
<svg style="left:977px;top:450px;" width="23" height="23" viewBox="0 0 23 23"><path d="M1 1h8l3.500 3.500V14H1z" fill="#fff" stroke="#7a7a7a" stroke-width="1"/><path d="M9.500 7.500h8l3.500 3.500V22H9.500z" fill="#fff" stroke="#5a7fb4" stroke-width="1"/><path d="M12 13h6.500M12 16h6.500M12 19h6.500" stroke="#7aa0d6" stroke-width="1"/><path d="M3 5h5M3 8h4M3 11h4" stroke="#a0a0a0" stroke-width="1"/></svg>
<div class="t h" style="left:1005px;top:449.8px;width:110px;height:23px;line-height:23px;font-size:18px;color:#1f1f1f;text-align:left;">复制条件(<u>C</u>)</div>
<div style="left:1113.2px;top:443px;width:1.8px;height:35.5px;background:#7a7a7a;"></div>
<div style="left:1119px;top:444.7px;width:32.8px;height:32.3px;background:#e4e4e4;border:1px solid #c3c3c3;"></div>
<svg style="left:1128.5px;top:457px;" width="14" height="8" viewBox="0 0 14 8"><path d="M0 7.500L7 0.500l7 7z" fill="#b0b0b0"/></svg>
<div style="left:1157px;top:444.7px;width:33px;height:32.3px;background:#e4e4e4;border:1px solid #c3c3c3;"></div>
<svg style="left:1166.5px;top:458px;" width="14" height="8" viewBox="0 0 14 8"><path d="M0 0.500L7 7.500l7-7z" fill="#b0b0b0"/></svg>
<div style="left:1194px;top:442.5px;width:100px;height:35.5px;background:#e1e1e1;border:1px solid #adadad;"></div>
<div class="t h" style="left:1189.4px;top:450.1px;width:110px;height:23px;line-height:23px;font-size:18px;color:#1f1f1f;text-align:center;">选项(<u>O</u>)...</div>
<div style="left:1308px;top:452px;width:16.5px;height:16.5px;background:#fff;border:1.300px solid #3a3a3a;"></div>
<svg style="left:1310.5px;top:455px;" width="12" height="11" viewBox="0 0 12 11"><path d="M1.500 5.500l3.200 3.500 6-7.500" fill="none" stroke="#2a2a2a" stroke-width="1.400"/></svg>
<div class="t h" style="left:1333px;top:450.1px;width:150px;height:23px;line-height:23px;font-size:18px;color:#1f1f1f;text-align:left;">数据包含标题(<u>H</u>)</div>
<div style="left:666px;top:485.8px;width:804.6px;height:175.2px;background:#fff;border:1px solid #a9adb8;box-shadow:inset 1px 1px 0 #d9dbe0;"></div>
<div style="left:957px;top:487px;width:1px;height:33px;background:#ececec;"></div>
<div style="left:1211.5px;top:487px;width:1px;height:33px;background:#ececec;"></div>
<div class="t h" style="left:672.7px;top:492.5px;width:40px;height:23px;line-height:23px;font-size:17.5px;color:#1f1f1f;text-align:left;">列</div>
<div class="t h" style="left:963.7px;top:492.5px;width:100px;height:23px;line-height:23px;font-size:17.5px;color:#1f1f1f;text-align:left;">排序依据</div>
<div class="t h" style="left:1216.8px;top:492.5px;width:60px;height:23px;line-height:23px;font-size:17.5px;color:#1f1f1f;text-align:left;">次序</div>
<div style="left:667px;top:519.8px;width:802.6px;height:34px;background:#e2e2e8;"></div>
<div class="t h" style="left:670.9px;top:522.9px;width:100px;height:23px;line-height:23px;font-size:17.5px;color:#1f1f1f;text-align:left;">排序依据</div>
<div style="left:776px;top:521.6px;width:166px;height:30.9px;background:#fff;border:1px solid #b9b9b9;"></div>
<div style="left:921px;top:523.1px;width:19.5px;height:27.9px;background:#e9e9e9;border:1px solid #cfcfcf;"></div>
<svg style="left:925.5px;top:534.55px;" width="11" height="7" viewBox="0 0 11 7"><path d="M1 1l4.500 4.500L10 1" fill="none" stroke="#555" stroke-width="1.300"/></svg>
<div style="left:959.8px;top:521.6px;width:236.2px;height:30.9px;background:#fff;border:1px solid #b9b9b9;"></div>
<div style="left:1175px;top:523.1px;width:19.5px;height:27.9px;background:#e9e9e9;border:1px solid #cfcfcf;"></div>
<svg style="left:1179.5px;top:534.55px;" width="11" height="7" viewBox="0 0 11 7"><path d="M1 1l4.500 4.500L10 1" fill="none" stroke="#555" stroke-width="1.300"/></svg>
<div class="t h" style="left:964.3px;top:525.85px;width:150px;height:23px;line-height:23px;font-size:17.5px;color:#1f1f1f;text-align:left;">单元格值</div>
<div style="left:1214px;top:521.6px;width:251.7px;height:30.9px;background:#fff;border:1px solid #b9b9b9;"></div>
<div style="left:1444.7px;top:523.1px;width:19.5px;height:27.9px;background:#e9e9e9;border:1px solid #cfcfcf;"></div>
<svg style="left:1449.2px;top:534.55px;" width="11" height="7" viewBox="0 0 11 7"><path d="M1 1l4.500 4.500L10 1" fill="none" stroke="#555" stroke-width="1.300"/></svg>
<div class="t h" style="left:1218.5px;top:525.85px;width:150px;height:23px;line-height:23px;font-size:17.5px;color:#1f1f1f;text-align:left;">升序</div>
<div style="left:1235.4px;top:669px;width:109.6px;height:33px;background:#e1e1e1;border:1px solid #adadad;"></div>
<div class="t h" style="left:1249.7px;top:674.7px;width:80px;height:23px;line-height:23px;font-size:17.5px;color:#1f1f1f;text-align:center;">确定</div>
<div style="left:1360px;top:669px;width:109.8px;height:33px;background:#e1e1e1;border:1px solid #adadad;"></div>
<div class="t h" style="left:1374.2px;top:674.7px;width:80px;height:23px;line-height:23px;font-size:17.5px;color:#1f1f1f;text-align:center;">取消</div>
<svg style="left:1465px;top:702px;" width="10" height="10" viewBox="0 0 10 10"><path d="M8 1v1M8 4v1M8 7v1M5 4v1M5 7v1M2 7v1" stroke="#b5b5b5" stroke-width="1.600"/></svg>
<div style="left:392px;top:324.5px;width:262.3px;height:448.3px;background:#f0f0f0;"></div>
<div style="left:392px;top:324.5px;width:262.3px;height:44.5px;background:#fff;"></div>
<div class="t h" style="left:401px;top:330.3px;width:120px;height:30px;line-height:30px;font-size:23.2px;color:#1a1a1a;text-align:left;">排序选项</div>
<div class="t h" style="left:538.4px;top:329px;width:20px;height:29px;line-height:29px;font-size:22px;color:#1a1a1a;text-align:center;">?</div>
<svg style="left:610px;top:335.2px;" width="18" height="18" viewBox="0 0 18 18"><path d="M1 1l16 16M17 1L1 17" stroke="#1a1a1a" stroke-width="1.500" fill="none"/></svg>
<div style="left:397.4px;top:389.6px;width:20px;height:19.6px;background:#fff;border:1.500px solid #333;"></div>
<div class="t h" style="left:424.8px;top:388px;width:140px;height:24px;line-height:24px;font-size:18.5px;color:#1f1f1f;text-align:left;">区分大小写(<u>C</u>)</div>
<div class="t h" style="left:397.4px;top:441.7px;width:50px;height:24px;line-height:24px;font-size:18.5px;color:#1f1f1f;text-align:left;">方向</div>
<div style="left:443.4px;top:452px;width:202.5px;height:1px;background:#dcdcdc;"></div>
<div style="left:411px;top:487.1px;width:20.6px;height:20.6px;background:#fff;border:1.800px solid #444;border-radius:50%;"></div>
<div class="t h" style="left:438.2px;top:485.6px;width:120px;height:24px;line-height:24px;font-size:18.5px;color:#1f1f1f;text-align:left;">按列排序(<u>T</u>)</div>
<div style="left:411.4px;top:524px;width:20.6px;height:20.6px;background:#fff;border:1.800px solid #444;border-radius:50%;"><div style="left:3.200px;top:3.200px;width:10.600px;height:10.600px;border-radius:50%;background:#2e2e2e;"></div></div>
<div style="left:435.1px;top:520.4px;width:103.4px;height:30.1px;border:1px dotted #333;"></div>
<div class="t h" style="left:438.6px;top:524px;width:120px;height:24px;line-height:24px;font-size:18.5px;color:#1f1f1f;text-align:left;">按行排序(<u>L</u>)</div>
<div class="t h" style="left:396.8px;top:569.5px;width:50px;height:24px;line-height:24px;font-size:18.5px;color:#1f1f1f;text-align:left;">方法</div>
<div style="left:442.6px;top:579px;width:203.7px;height:1px;background:#dcdcdc;"></div>
<div style="left:411px;top:614.7px;width:20.6px;height:20.6px;background:#fff;border:1.800px solid #444;border-radius:50%;"><div style="left:3.200px;top:3.200px;width:10.600px;height:10.600px;border-radius:50%;background:#2e2e2e;"></div></div>
<div class="t h" style="left:438.2px;top:613.2px;width:120px;height:24px;line-height:24px;font-size:18.5px;color:#1f1f1f;text-align:left;">字母排序(<u>S</u>)</div>
<div style="left:411px;top:653.3px;width:20.6px;height:20.6px;background:#fff;border:1.800px solid #444;border-radius:50%;"></div>
<div class="t h" style="left:438.2px;top:651.8px;width:120px;height:24px;line-height:24px;font-size:18.5px;color:#1f1f1f;text-align:left;">笔划排序(<u>R</u>)</div>
<div style="left:398.3px;top:712.3px;width:114.4px;height:46px;background:#e5f1fb;border:1.600px solid #2a82da;"></div>
<div class="t h" style="left:415.3px;top:725.2px;width:80px;height:24px;line-height:24px;font-size:18.5px;color:#1f1f1f;text-align:center;">确定</div>
<div style="left:529px;top:713.5px;width:114.3px;height:43.5px;background:#e1e1e1;border:1px solid #adadad;"></div>
<div class="t h" style="left:545.8px;top:725.2px;width:80px;height:24px;line-height:24px;font-size:18.5px;color:#1f1f1f;text-align:center;">取消</div>
<svg style="left:492.4px;top:731.7px;" width="22" height="40" viewBox="0 0 22 40"><path transform="translate(1.500 1.500)" d="M0 0V26L5.600 20.800 11.200 34.600 15.800 32.700 10.300 19.600H17.900z" fill="#000" stroke="#fff" stroke-width="1.300" stroke-linejoin="round"/></svg>
<div style="left:469.8px;top:9.4px;width:73.7px;height:44.9px;border:4px solid #ee0a0a;border-radius:9px;"></div>
<div style="left:266.5px;top:174px;width:1081.5px;height:39.6px;border:4.2px solid #ee0a0a;border-radius:9px;"></div>
<div style="left:595px;top:54px;width:53.7px;height:74.8px;border:4px solid #ee0a0a;border-radius:9px;"></div>
<div style="left:1188.4px;top:437.4px;width:109.7px;height:44.4px;border:4px solid #ee0a0a;border-radius:9px;"></div>
<div style="left:401.1px;top:514.8px;width:145.9px;height:40.6px;border:4px solid #ee0a0a;border-radius:9px;"></div>
<div style="left:394.8px;top:707.5px;width:121px;height:55.3px;border:4px solid #ee0a0a;border-radius:10px;"></div>
<div style="left:541.45px;top:47.55px;width:27.5px;height:27.5px;background:#000;border-radius:50%;"></div>
<div class="t f" style="left:540.2px;top:45.6px;width:30px;height:32px;line-height:32px;font-size:25px;color:#fff;text-align:center;font-weight:bold;">1</div>
<div style="left:606.95px;top:133.95px;width:27.5px;height:27.5px;background:#000;border-radius:50%;"></div>
<div class="t f" style="left:605.7px;top:132px;width:30px;height:32px;line-height:32px;font-size:25px;color:#fff;text-align:center;font-weight:bold;">2</div>
<div style="left:1224.95px;top:407.75px;width:27.5px;height:27.5px;background:#000;border-radius:50%;"></div>
<div class="t f" style="left:1223.7px;top:405.8px;width:30px;height:32px;line-height:32px;font-size:25px;color:#fff;text-align:center;font-weight:bold;">3</div>
<div style="left:555.25px;top:519.95px;width:27.5px;height:27.5px;background:#000;border-radius:50%;"></div>
<div class="t f" style="left:554px;top:518px;width:30px;height:32px;line-height:32px;font-size:25px;color:#fff;text-align:center;font-weight:bold;">4</div>
<div style="left:453.95px;top:679.25px;width:27.5px;height:27.5px;background:#000;border-radius:50%;"></div>
<div class="t f" style="left:452.7px;top:677.3px;width:30px;height:32px;line-height:32px;font-size:25px;color:#fff;text-align:center;font-weight:bold;">5</div>
</body></html>
